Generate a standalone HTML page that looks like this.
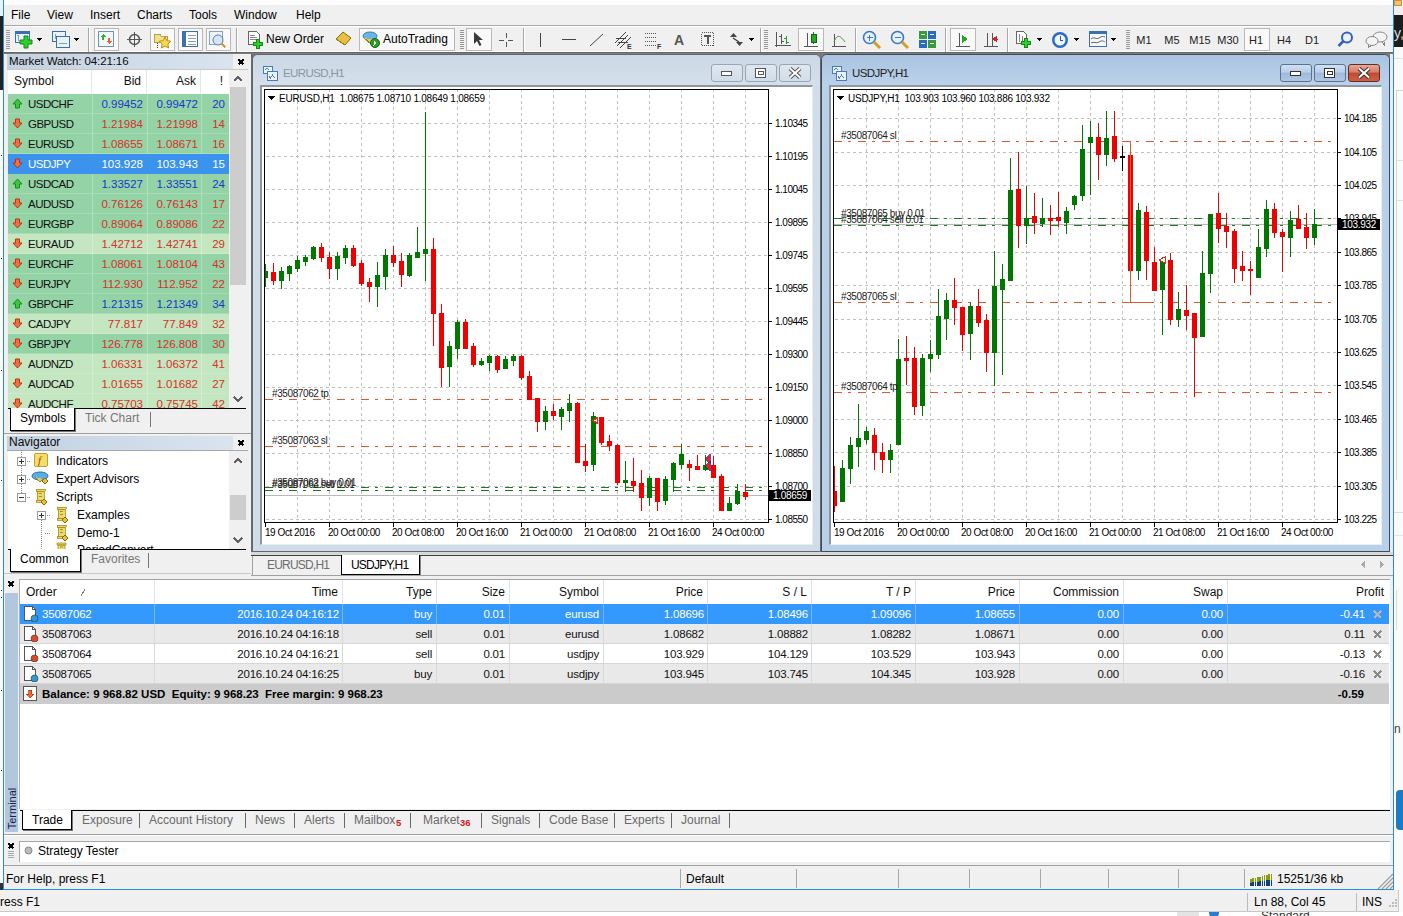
<!DOCTYPE html>
<html><head><meta charset="utf-8"><title>MetaTrader 4</title>
<style>
html,body{margin:0;padding:0;}
body{width:1403px;height:916px;position:relative;overflow:hidden;background:#f0f0f0;font-family:"Liberation Sans", sans-serif;}
div,svg{box-sizing:border-box;}
</style></head><body>
<div style="position:absolute;left:0px;top:0px;width:3px;height:16px;background:#e9f3fb;"></div><div style="position:absolute;left:0px;top:16px;width:3px;height:74px;background:#222;"></div><div style="position:absolute;left:0px;top:90px;width:3px;height:800px;background:#fbfbfb;"></div><div style="position:absolute;left:1px;top:155px;width:1px;height:1px;background:#333;"></div><div style="position:absolute;left:1px;top:258px;width:1px;height:1px;background:#333;"></div><div style="position:absolute;left:1px;top:370px;width:1px;height:1px;background:#333;"></div><div style="position:absolute;left:1px;top:480px;width:1px;height:1px;background:#333;"></div><div style="position:absolute;left:1px;top:590px;width:1px;height:1px;background:#333;"></div><div style="position:absolute;left:1px;top:597px;width:1px;height:1px;background:#333;"></div><div style="position:absolute;left:1px;top:690px;width:1px;height:1px;background:#333;"></div><div style="position:absolute;left:1px;top:770px;width:1px;height:1px;background:#333;"></div><div style="position:absolute;left:0px;top:883px;width:3px;height:7px;background:#333;"></div><div style="position:absolute;left:1394px;top:0px;width:9px;height:6px;background:#f5f5f5;"></div><div style="position:absolute;left:1394px;top:0px;width:8px;height:6px;background:#f6c26b;border:1px solid #c89040;"></div><div style="position:absolute;left:1394px;top:15px;width:9px;height:32px;background:#1d1d1d;"></div><div style="position:absolute;left:1394px;top:25px;font-size:14px;line-height:17px;color:#ddd;white-space:nowrap;">y,</div><div style="position:absolute;left:1394px;top:47px;width:9px;height:843px;background:#fafafa;"></div><div style="position:absolute;left:1394px;top:58px;width:9px;height:1px;background:#e4e4e4;"></div><div style="position:absolute;left:1396px;top:90px;width:1px;height:390px;background:#d4d4d4;"></div><div style="position:absolute;left:1396px;top:90px;width:7px;height:1px;background:#d4d4d4;"></div><div style="position:absolute;left:1397px;top:160px;width:6px;height:1px;background:#e0e0e0;"></div><div style="position:absolute;left:1397px;top:200px;width:6px;height:1px;background:#e0e0e0;"></div><div style="position:absolute;left:1394px;top:512px;width:9px;height:1px;background:#dcdcdc;"></div><div style="position:absolute;left:1394px;top:535px;width:9px;height:1px;background:#e6e6e6;"></div><div style="position:absolute;left:1396px;top:590px;width:1px;height:40px;background:#d8d8d8;"></div><div style="position:absolute;left:1394px;top:722px;font-size:12px;line-height:15px;color:#444;white-space:nowrap;">n</div><div style="position:absolute;left:1396px;top:790px;width:7px;height:40px;background:#1b7bc4;border-radius:4px 0 0 4px;"></div><div style="position:absolute;left:0px;top:890px;width:1399px;height:21px;background:#f0f0f0;"></div><div style="position:absolute;left:1398px;top:890px;width:1px;height:21px;background:#c8c8c8;"></div><div style="position:absolute;left:0px;top:911px;width:1399px;height:1px;background:#c8c8c8;"></div><div style="position:absolute;left:0px;top:912px;width:1403px;height:4px;background:#fff;"></div><div style="position:absolute;left:1399px;top:890px;width:4px;height:22px;background:#fafafa;"></div><div style="position:absolute;left:0px;top:895px;font-size:12px;line-height:15px;color:#000;white-space:nowrap;">ress F1</div><div style="position:absolute;left:1247px;top:893px;width:1px;height:18px;background:#bbb;"></div><div style="position:absolute;left:1254px;top:895px;font-size:12px;line-height:15px;color:#000;white-space:nowrap;">Ln 88, Col 45</div><div style="position:absolute;left:1356px;top:893px;width:1px;height:18px;background:#bbb;"></div><div style="position:absolute;left:1362px;top:895px;font-size:12px;line-height:15px;color:#000;white-space:nowrap;">INS</div><svg style="position:absolute;left:1388px;top:898px;" width="10" height="10" viewBox="0 0 10 10" shape-rendering="crispEdges"><rect x="7" y="1" width="2" height="2" fill="#bbb"/><rect x="4" y="4" width="2" height="2" fill="#bbb"/><rect x="7" y="4" width="2" height="2" fill="#bbb"/><rect x="1" y="7" width="2" height="2" fill="#bbb"/><rect x="4" y="7" width="2" height="2" fill="#bbb"/><rect x="7" y="7" width="2" height="2" fill="#bbb"/></svg><div style="position:absolute;left:1177px;top:912px;width:22px;height:4px;background:#e4e4e4;"></div><div style="position:absolute;left:1200px;top:912px;width:120px;height:4px;overflow:hidden;"><div style="position:absolute;left:61px;top:-3px;font-size:12px;line-height:14px;color:#333;">Standard</div><div style="position:absolute;left:9px;top:-4px;width:10px;height:10px;border-radius:5px;background:#2a7ad0;"></div></div><div style="position:absolute;left:3px;top:0px;width:1px;height:890px;background:#2f8ad4;"></div><div style="position:absolute;left:1393px;top:0px;width:1px;height:890px;background:#2f8ad4;"></div><div style="position:absolute;left:3px;top:889px;width:1391px;height:1px;background:#2f8ad4;"></div><div style="position:absolute;left:4px;top:0px;width:1389px;height:5px;background:#fdfdfd;"></div><div style="position:absolute;left:4px;top:5px;width:1389px;height:20px;background:#f0f0f0;"></div><div style="position:absolute;left:11px;top:8px;font-size:12px;line-height:15px;color:#000;white-space:nowrap;">File</div><div style="position:absolute;left:47px;top:8px;font-size:12px;line-height:15px;color:#000;white-space:nowrap;">View</div><div style="position:absolute;left:90px;top:8px;font-size:12px;line-height:15px;color:#000;white-space:nowrap;">Insert</div><div style="position:absolute;left:137px;top:8px;font-size:12px;line-height:15px;color:#000;white-space:nowrap;">Charts</div><div style="position:absolute;left:189px;top:8px;font-size:12px;line-height:15px;color:#000;white-space:nowrap;">Tools</div><div style="position:absolute;left:234px;top:8px;font-size:12px;line-height:15px;color:#000;white-space:nowrap;">Window</div><div style="position:absolute;left:296px;top:8px;font-size:12px;line-height:15px;color:#000;white-space:nowrap;">Help</div><div style="position:absolute;left:4px;top:25px;width:1389px;height:1px;background:#a9a9a9;"></div><div style="position:absolute;left:4px;top:26px;width:1389px;height:1px;background:#fff;"></div><div style="position:absolute;left:4px;top:27px;width:1389px;height:25px;background:#f0f0f0;"></div><div style="position:absolute;left:4px;top:51px;width:1389px;height:1px;background:#fff;"></div><div style="position:absolute;left:4px;top:52px;width:1389px;height:2px;background:linear-gradient(#5a5a5a,#8a8a8a);"></div><svg style="position:absolute;left:6px;top:30px;" width="4" height="20" viewBox="0 0 4 20" shape-rendering="crispEdges"><rect x="0" y="0" width="4" height="1" fill="#9a9a9a"/><rect x="0" y="2" width="4" height="1" fill="#9a9a9a"/><rect x="0" y="4" width="4" height="1" fill="#9a9a9a"/><rect x="0" y="6" width="4" height="1" fill="#9a9a9a"/><rect x="0" y="8" width="4" height="1" fill="#9a9a9a"/><rect x="0" y="10" width="4" height="1" fill="#9a9a9a"/><rect x="0" y="12" width="4" height="1" fill="#9a9a9a"/><rect x="0" y="14" width="4" height="1" fill="#9a9a9a"/><rect x="0" y="16" width="4" height="1" fill="#9a9a9a"/><rect x="0" y="18" width="4" height="1" fill="#9a9a9a"/></svg><svg style="position:absolute;left:15px;top:30px;" width="19" height="19" viewBox="0 0 19 19" shape-rendering="crispEdges"><rect x="0.5" y="1.5" width="14" height="11" fill="#eaf2fb" stroke="#3a6fb0"/><rect x="0.5" y="1.5" width="14" height="2" fill="#3a6fb0"/><path d="M3 5v6M2 6l1-1 1 1" stroke="#7f9cc4" fill="none"/><path d="M9 6h4v4h4v4h-4v4h-4v-4H5v-4h4z" fill="#2fcf2f" stroke="#118a11" shape-rendering="geometricPrecision"/></svg><svg style="position:absolute;left:37px;top:38px;" width="5" height="3" viewBox="0 0 5 3" shape-rendering="crispEdges"><path d="M0 0H5L2.5 3Z" fill="#000"/></svg><svg style="position:absolute;left:52px;top:30px;" width="19" height="19" viewBox="0 0 19 19" shape-rendering="crispEdges"><rect x="0.5" y="1.5" width="13" height="10" fill="#eaf2fb" stroke="#3a6fb0"/><rect x="4.5" y="6.5" width="13" height="11" fill="#eaf2fb" stroke="#3a6fb0"/><path d="M3 4v5M7 13h8" stroke="#7f9cc4"/></svg><svg style="position:absolute;left:74px;top:38px;" width="5" height="3" viewBox="0 0 5 3" shape-rendering="crispEdges"><path d="M0 0H5L2.5 3Z" fill="#000"/></svg><div style="position:absolute;left:88px;top:28px;width:1px;height:24px;background:#a8a8a8;"></div><div style="position:absolute;left:89px;top:28px;width:1px;height:24px;background:#fff;"></div><div style="position:absolute;left:94px;top:28px;width:25px;height:23px;border:1px solid #b9b9b9;background:#f9f9f9;"></div><svg style="position:absolute;left:98px;top:31px;" width="16" height="17" viewBox="0 0 16 17" shape-rendering="crispEdges"><rect x="0.5" y="0.5" width="15" height="15" fill="#f3f8fd" stroke="#6a92c4"/><path d="M5 3l3 3H6v3H4V6H2z" fill="#2fb62f"/><path d="M11 13l3-3h-2V7h-2v3H8z" fill="#f06030"/></svg><svg style="position:absolute;left:127px;top:32px;" width="15" height="15" viewBox="0 0 15 15" shape-rendering="crispEdges"><circle cx="7.5" cy="7.5" r="5" fill="none" stroke="#555" stroke-width="1.5" shape-rendering="geometricPrecision"/><path d="M7.5 0v15M0 7.5h15" stroke="#555" stroke-width="1.3"/></svg><div style="position:absolute;left:150px;top:28px;width:25px;height:23px;border:1px solid #b9b9b9;background:#f9f9f9;"></div><svg style="position:absolute;left:153px;top:31px;" width="19" height="18" viewBox="0 0 19 18" shape-rendering="crispEdges"><path d="M1 3h6l1 2h6v6H1z" fill="#f4e08a" stroke="#b8a040"/><path d="M12 6l1.8 3.6 4 .6-2.9 2.8.7 4-3.6-1.9-3.6 1.9.7-4L6.2 10.2l4-.6z" fill="#f7d84a" stroke="#b89020" shape-rendering="geometricPrecision"/><path d="M4 12v5" stroke="#333" stroke-dasharray="1 1"/></svg><div style="position:absolute;left:178px;top:28px;width:25px;height:23px;border:1px solid #b9b9b9;background:#f9f9f9;"></div><svg style="position:absolute;left:182px;top:31px;" width="16" height="16" viewBox="0 0 16 16" shape-rendering="crispEdges"><rect x="0.5" y="0.5" width="15" height="15" fill="#fff" stroke="#3a6fb0"/><rect x="1" y="1" width="3" height="14" fill="#3a6fb0"/><path d="M6 4h8M6 7h8M6 10h8M6 13h8" stroke="#8aa0c0"/></svg><div style="position:absolute;left:206px;top:28px;width:25px;height:23px;border:1px solid #b9b9b9;background:#f9f9f9;"></div><svg style="position:absolute;left:209px;top:30px;" width="19" height="20" viewBox="0 0 19 20" shape-rendering="crispEdges"><rect x="0.5" y="1.5" width="13" height="13" fill="#eef4fb" stroke="#8aa0c0"/><circle cx="9" cy="10" r="5" fill="#d6e6f6" stroke="#5a7fae" shape-rendering="geometricPrecision"/><path d="M12.5 13.5l4 4" stroke="#c8a030" stroke-width="2.5"/></svg><div style="position:absolute;left:236px;top:28px;width:1px;height:24px;background:#a8a8a8;"></div><div style="position:absolute;left:237px;top:28px;width:1px;height:24px;background:#fff;"></div><svg style="position:absolute;left:247px;top:31px;" width="17" height="18" viewBox="0 0 17 18" shape-rendering="crispEdges"><path d="M1.5 0.5h8l3 3v10h-11z" fill="#fff" stroke="#666"/><path d="M3 4h5M3 6h7M3 8h7" stroke="#888"/><path d="M9 8h3v3h3v3h-3v3H9v-3H6v-3h3z" fill="#2fcf2f" stroke="#118a11"/></svg><div style="position:absolute;left:266px;top:32px;font-size:12px;line-height:15px;color:#000;white-space:nowrap;">New Order</div><svg style="position:absolute;left:334px;top:31px;" width="18" height="16" viewBox="0 0 18 16" shape-rendering="crispEdges"><path d="M2 8l7-7 8 6-6 7z" fill="#e8c040" stroke="#8a6a10" shape-rendering="geometricPrecision"/><path d="M2 8l9 6" stroke="#a08020"/></svg><div style="position:absolute;left:359px;top:28px;width:96px;height:23px;border:1px solid #b9b9b9;background:#f9f9f9;"></div><svg style="position:absolute;left:362px;top:30px;" width="18" height="19" viewBox="0 0 18 19" shape-rendering="crispEdges"><ellipse cx="8" cy="6" rx="7" ry="4" fill="#6ab4e8" stroke="#3a7ab0" shape-rendering="geometricPrecision"/><path d="M2 8l7 6 5-4" fill="#e8c850" stroke="#a08020"/><circle cx="13" cy="13" r="4.5" fill="#28a028" stroke="#0a6a0a" shape-rendering="geometricPrecision"/><path d="M11.5 10.5v5l3.5-2.5z" fill="#fff"/></svg><div style="position:absolute;left:383px;top:32px;font-size:12px;line-height:15px;color:#000;white-space:nowrap;">AutoTrading</div><svg style="position:absolute;left:460px;top:30px;" width="4" height="20" viewBox="0 0 4 20" shape-rendering="crispEdges"><rect x="0" y="0" width="4" height="1" fill="#9a9a9a"/><rect x="0" y="2" width="4" height="1" fill="#9a9a9a"/><rect x="0" y="4" width="4" height="1" fill="#9a9a9a"/><rect x="0" y="6" width="4" height="1" fill="#9a9a9a"/><rect x="0" y="8" width="4" height="1" fill="#9a9a9a"/><rect x="0" y="10" width="4" height="1" fill="#9a9a9a"/><rect x="0" y="12" width="4" height="1" fill="#9a9a9a"/><rect x="0" y="14" width="4" height="1" fill="#9a9a9a"/><rect x="0" y="16" width="4" height="1" fill="#9a9a9a"/><rect x="0" y="18" width="4" height="1" fill="#9a9a9a"/></svg><div style="position:absolute;left:466px;top:28px;width:26px;height:23px;border:1px solid #b9b9b9;background:#f9f9f9;"></div><svg style="position:absolute;left:473px;top:32px;" width="11" height="15" viewBox="0 0 11 15" shape-rendering="crispEdges"><path d="M1 0v12l3-3 2.5 5 2-1-2.5-5H10z" fill="#3a3a3a" shape-rendering="geometricPrecision"/></svg><svg style="position:absolute;left:498px;top:32px;" width="16" height="16" viewBox="0 0 16 16" shape-rendering="crispEdges"><path d="M8 1v5M8 10v5M1 8h5M10 8h5" stroke="#555"/></svg><div style="position:absolute;left:523px;top:28px;width:1px;height:24px;background:#a8a8a8;"></div><div style="position:absolute;left:524px;top:28px;width:1px;height:24px;background:#fff;"></div><svg style="position:absolute;left:539px;top:33px;" width="3" height="14" viewBox="0 0 3 14" shape-rendering="crispEdges"><rect x="1" y="0" width="1" height="14" fill="#444"/></svg><svg style="position:absolute;left:562px;top:39px;" width="14" height="2" viewBox="0 0 14 2" shape-rendering="crispEdges"><rect x="0" y="0" width="14" height="1" fill="#444"/></svg><svg style="position:absolute;left:589px;top:33px;" width="15" height="14" viewBox="0 0 15 14" shape-rendering="crispEdges"><path d="M1 13L14 1" stroke="#444" shape-rendering="geometricPrecision"/></svg><svg style="position:absolute;left:614px;top:31px;" width="20" height="18" viewBox="0 0 20 18" shape-rendering="crispEdges"><path d="M1 12L12 1M3 15L14 4M6 17L17 6" stroke="#444" shape-rendering="geometricPrecision"/><path d="M2 7h10M4 11h10" stroke="#444"/><text x="13" y="18" font-size="7" font-family="Liberation Sans" font-weight="bold" fill="#333">E</text></svg><svg style="position:absolute;left:644px;top:31px;" width="20" height="18" viewBox="0 0 20 18" shape-rendering="crispEdges"><path d="M1 2h12M1 6h12M1 10h12M1 14h12" stroke="#555" stroke-dasharray="1 1"/><text x="13" y="18" font-size="7" font-family="Liberation Sans" font-weight="bold" fill="#333">F</text></svg><div style="position:absolute;left:674px;top:32px;font-size:14px;line-height:17px;color:#555;white-space:nowrap;font-weight:bold;">A</div><svg style="position:absolute;left:700px;top:31px;" width="16" height="17" viewBox="0 0 16 17" shape-rendering="crispEdges"><rect x="1.5" y="1.5" width="12" height="13" fill="none" stroke="#555" stroke-dasharray="1 1"/><path d="M4 4h7v2H8.5v7h-2V6H4z" fill="#555"/></svg><svg style="position:absolute;left:729px;top:32px;" width="16" height="16" viewBox="0 0 16 16" shape-rendering="crispEdges"><path d="M1 5L4.5 1 8 5z" fill="#444" shape-rendering="geometricPrecision"/><path d="M7 10l3.5 4 3.5-4z" fill="#444" shape-rendering="geometricPrecision"/><path d="M4 6l6 4" stroke="#444" stroke-width="1.5" shape-rendering="geometricPrecision"/></svg><svg style="position:absolute;left:749px;top:38px;" width="5" height="3" viewBox="0 0 5 3" shape-rendering="crispEdges"><path d="M0 0H5L2.5 3Z" fill="#000"/></svg><div style="position:absolute;left:760px;top:28px;width:1px;height:24px;background:#a8a8a8;"></div><div style="position:absolute;left:761px;top:28px;width:1px;height:24px;background:#fff;"></div><svg style="position:absolute;left:764px;top:30px;" width="4" height="20" viewBox="0 0 4 20" shape-rendering="crispEdges"><rect x="0" y="0" width="4" height="1" fill="#9a9a9a"/><rect x="0" y="2" width="4" height="1" fill="#9a9a9a"/><rect x="0" y="4" width="4" height="1" fill="#9a9a9a"/><rect x="0" y="6" width="4" height="1" fill="#9a9a9a"/><rect x="0" y="8" width="4" height="1" fill="#9a9a9a"/><rect x="0" y="10" width="4" height="1" fill="#9a9a9a"/><rect x="0" y="12" width="4" height="1" fill="#9a9a9a"/><rect x="0" y="14" width="4" height="1" fill="#9a9a9a"/><rect x="0" y="16" width="4" height="1" fill="#9a9a9a"/><rect x="0" y="18" width="4" height="1" fill="#9a9a9a"/></svg><svg style="position:absolute;left:775px;top:31px;" width="17" height="17" viewBox="0 0 17 17" shape-rendering="crispEdges"><path d="M1.5 1v15M0 14.5h16" stroke="#555"/><path d="M6.5 3v10M4 5h2.5M6.5 10H9" stroke="#555"/><path d="M11.5 5v8M9 7h2.5M11.5 11H14" stroke="#2a9a2a"/></svg><div style="position:absolute;left:798px;top:28px;width:26px;height:23px;border:1px solid #b9b9b9;background:#f9f9f9;"></div><svg style="position:absolute;left:803px;top:31px;" width="16" height="16" viewBox="0 0 16 16" shape-rendering="crispEdges"><path d="M1 15h14M4 2v13M10 1v12" stroke="#555"/><rect x="8" y="3" width="5" height="8" fill="#22aa22" stroke="#0a6a0a"/></svg><svg style="position:absolute;left:831px;top:32px;" width="16" height="15" viewBox="0 0 16 15" shape-rendering="crispEdges"><path d="M1 14h14M3 2v12" stroke="#555"/><path d="M3 10C6 2 9 3 14 10" stroke="#4a8a4a" fill="none" shape-rendering="geometricPrecision"/></svg><div style="position:absolute;left:855px;top:28px;width:1px;height:24px;background:#a8a8a8;"></div><div style="position:absolute;left:856px;top:28px;width:1px;height:24px;background:#fff;"></div><svg style="position:absolute;left:862px;top:30px;" width="20" height="20" viewBox="0 0 20 20" shape-rendering="crispEdges"><circle cx="7.5" cy="7.5" r="6" fill="#e8f2fc" stroke="#3a78c0" stroke-width="1.6" shape-rendering="geometricPrecision"/><path d="M4.5 7.5h6M7.5 4.5v6" stroke="#3a78c0" stroke-width="1.8"/><path d="M12 12l6 6" stroke="#d4a020" stroke-width="3" shape-rendering="geometricPrecision"/></svg><svg style="position:absolute;left:890px;top:30px;" width="20" height="20" viewBox="0 0 20 20" shape-rendering="crispEdges"><circle cx="7.5" cy="7.5" r="6" fill="#e8f2fc" stroke="#3a78c0" stroke-width="1.6" shape-rendering="geometricPrecision"/><path d="M4.5 7.5h6" stroke="#3a78c0" stroke-width="1.8"/><path d="M12 12l6 6" stroke="#d4a020" stroke-width="3" shape-rendering="geometricPrecision"/></svg><svg style="position:absolute;left:919px;top:31px;" width="18" height="18" viewBox="0 0 18 18" shape-rendering="crispEdges"><rect x="0" y="0" width="8" height="8" fill="#3a9a3a"/><rect x="9" y="0" width="8" height="8" fill="#2a6ac0"/><rect x="0" y="9" width="8" height="8" fill="#2a6ac0"/><rect x="9" y="9" width="8" height="8" fill="#3a9a3a"/><path d="M2 3h4M11 3h4M2 12h4M11 12h4" stroke="#cfe"/></svg><div style="position:absolute;left:945px;top:28px;width:1px;height:24px;background:#a8a8a8;"></div><div style="position:absolute;left:946px;top:28px;width:1px;height:24px;background:#fff;"></div><div style="position:absolute;left:950px;top:28px;width:26px;height:23px;border:1px solid #b9b9b9;background:#f9f9f9;"></div><svg style="position:absolute;left:955px;top:31px;" width="16" height="16" viewBox="0 0 16 16" shape-rendering="crispEdges"><path d="M1 15h14M4 2v13" stroke="#555"/><path d="M7 4v8l6-4z" fill="#22aa22"/></svg><svg style="position:absolute;left:983px;top:31px;" width="16" height="16" viewBox="0 0 16 16" shape-rendering="crispEdges"><path d="M1 15h14M4 2v13M9 2v13" stroke="#555"/><path d="M10 8h5M10 8l3-2v4z" fill="#d02020" stroke="#d02020"/></svg><div style="position:absolute;left:1007px;top:28px;width:1px;height:24px;background:#a8a8a8;"></div><div style="position:absolute;left:1008px;top:28px;width:1px;height:24px;background:#fff;"></div><svg style="position:absolute;left:1015px;top:30px;" width="19" height="19" viewBox="0 0 19 19" shape-rendering="crispEdges"><path d="M1.5 1.5h7l3 3v9h-10z" fill="#fff" stroke="#666"/><path d="M4 4v8M7 6v6" stroke="#888"/><path d="M9 8h3v3h3v3h-3v3H9v-3H6v-3h3z" fill="#2fcf2f" stroke="#118a11"/></svg><svg style="position:absolute;left:1037px;top:38px;" width="5" height="3" viewBox="0 0 5 3" shape-rendering="crispEdges"><path d="M0 0H5L2.5 3Z" fill="#000"/></svg><svg style="position:absolute;left:1051px;top:31px;" width="18" height="18" viewBox="0 0 18 18" shape-rendering="crispEdges"><circle cx="9" cy="9" r="8" fill="#2a6ac0" shape-rendering="geometricPrecision"/><circle cx="9" cy="9" r="5.5" fill="#eef6ff" shape-rendering="geometricPrecision"/><path d="M9 5v4h3" stroke="#2a5a9a" fill="none"/></svg><svg style="position:absolute;left:1074px;top:38px;" width="5" height="3" viewBox="0 0 5 3" shape-rendering="crispEdges"><path d="M0 0H5L2.5 3Z" fill="#000"/></svg><svg style="position:absolute;left:1089px;top:31px;" width="18" height="17" viewBox="0 0 18 17" shape-rendering="crispEdges"><rect x="0.5" y="0.5" width="17" height="15" fill="#f4f8fc" stroke="#3a6fb0"/><rect x="1" y="1" width="16" height="2" fill="#3a6fb0"/><path d="M2 8c3-3 5 1 8-1s4-2 6-1M2 12c3-2 5 1 8-1s4-1 6 0" stroke="#666" fill="none" shape-rendering="geometricPrecision"/></svg><svg style="position:absolute;left:1111px;top:38px;" width="5" height="3" viewBox="0 0 5 3" shape-rendering="crispEdges"><path d="M0 0H5L2.5 3Z" fill="#000"/></svg><svg style="position:absolute;left:1126px;top:30px;" width="4" height="20" viewBox="0 0 4 20" shape-rendering="crispEdges"><rect x="0" y="0" width="4" height="1" fill="#9a9a9a"/><rect x="0" y="2" width="4" height="1" fill="#9a9a9a"/><rect x="0" y="4" width="4" height="1" fill="#9a9a9a"/><rect x="0" y="6" width="4" height="1" fill="#9a9a9a"/><rect x="0" y="8" width="4" height="1" fill="#9a9a9a"/><rect x="0" y="10" width="4" height="1" fill="#9a9a9a"/><rect x="0" y="12" width="4" height="1" fill="#9a9a9a"/><rect x="0" y="14" width="4" height="1" fill="#9a9a9a"/><rect x="0" y="16" width="4" height="1" fill="#9a9a9a"/><rect x="0" y="18" width="4" height="1" fill="#9a9a9a"/></svg><div style="position:absolute;left:1044px;width:200px;top:33px;font-size:11px;line-height:14px;color:#222;white-space:nowrap;text-align:center;">M1</div><div style="position:absolute;left:1072px;width:200px;top:33px;font-size:11px;line-height:14px;color:#222;white-space:nowrap;text-align:center;">M5</div><div style="position:absolute;left:1100px;width:200px;top:33px;font-size:11px;line-height:14px;color:#222;white-space:nowrap;text-align:center;">M15</div><div style="position:absolute;left:1128px;width:200px;top:33px;font-size:11px;line-height:14px;color:#222;white-space:nowrap;text-align:center;">M30</div><div style="position:absolute;left:1244px;top:28px;width:26px;height:23px;border:1px solid #b9b9b9;background:#f9f9f9;"></div><div style="position:absolute;left:1156px;width:200px;top:33px;font-size:11px;line-height:14px;color:#222;white-space:nowrap;text-align:center;">H1</div><div style="position:absolute;left:1184px;width:200px;top:33px;font-size:11px;line-height:14px;color:#222;white-space:nowrap;text-align:center;">H4</div><div style="position:absolute;left:1212px;width:200px;top:33px;font-size:11px;line-height:14px;color:#222;white-space:nowrap;text-align:center;">D1</div><svg style="position:absolute;left:1337px;top:31px;" width="17" height="17" viewBox="0 0 17 17" shape-rendering="crispEdges"><circle cx="10" cy="6.5" r="5" fill="none" stroke="#3060c0" stroke-width="2" shape-rendering="geometricPrecision"/><path d="M6.5 10L1.5 15" stroke="#3060c0" stroke-width="2.5" shape-rendering="geometricPrecision"/></svg><svg style="position:absolute;left:1365px;top:31px;" width="24" height="17" viewBox="0 0 24 17" shape-rendering="crispEdges"><ellipse cx="15" cy="6" rx="7" ry="5" fill="#f4f4f4" stroke="#888" shape-rendering="geometricPrecision"/><path d="M17 10.5l2 3 0-3" fill="#f4f4f4" stroke="#888"/><ellipse cx="7" cy="10" rx="6" ry="4.5" fill="#f4f4f4" stroke="#888" shape-rendering="geometricPrecision"/><path d="M4 14l-1 3 3-2.5" fill="#f4f4f4" stroke="#888"/></svg><div style="position:absolute;left:4px;top:54px;width:247px;height:522px;background:#f0f0f0;"></div><div style="position:absolute;left:7px;top:54px;width:226px;height:15px;background:linear-gradient(90deg,#c3d1e0,#d9e4ef);"></div><div style="position:absolute;left:9px;top:54px;font-size:11.5px;line-height:14.5px;color:#0a0a0a;white-space:nowrap;letter-spacing:-0.1px;">Market Watch: 04:21:16</div><svg style="position:absolute;left:237px;top:58px;" width="8" height="8" viewBox="0 0 8 8" shape-rendering="crispEdges"><path d="M1.5 1.5l5 5M6.5 1.5l-5 5" stroke="#000" stroke-width="1.6"/></svg><div style="position:absolute;left:7px;top:69px;width:241px;height:1px;background:#c8c8c8;"></div><div style="position:absolute;left:8px;top:70px;width:221px;height:338px;background:#fff;"></div><div style="position:absolute;left:91px;top:70px;width:1px;height:23px;background:#e5e5e5;"></div><div style="position:absolute;left:146px;top:70px;width:1px;height:23px;background:#e5e5e5;"></div><div style="position:absolute;left:200px;top:70px;width:1px;height:23px;background:#e5e5e5;"></div><div style="position:absolute;left:14px;top:74px;font-size:12px;line-height:15px;color:#111;white-space:nowrap;">Symbol</div><div style="position:absolute;right:1262px;top:74px;font-size:12px;line-height:15px;color:#111;white-space:nowrap;text-align:right;">Bid</div><div style="position:absolute;right:1207px;top:74px;font-size:12px;line-height:15px;color:#111;white-space:nowrap;text-align:right;">Ask</div><div style="position:absolute;right:1180px;top:74px;font-size:12px;line-height:15px;color:#111;white-space:nowrap;text-align:right;">!</div><div style="position:absolute;left:8px;top:93px;width:221px;height:315px;overflow:hidden;"><div style="position:absolute;left:0;top:1px;width:221px;height:20px;background:#93d3a6;"></div><div style="position:absolute;left:84px;top:1px;width:1px;height:20px;background:rgba(255,255,255,0.25);"></div><div style="position:absolute;left:139px;top:1px;width:1px;height:20px;background:rgba(255,255,255,0.25);"></div><div style="position:absolute;left:193px;top:1px;width:1px;height:20px;background:rgba(255,255,255,0.25);"></div><div style="position:absolute;left:0;top:20px;width:221px;height:1px;background:rgba(255,255,255,0.18);"></div><svg style="position:absolute;left:4px;top:5px" width="11" height="11"><path d="M5.5 1L10 6H7.5v4h-4V6H1z" fill="#3cc83c" stroke="#1a8a1a" shape-rendering="geometricPrecision"/></svg><div style="position:absolute;left:20px;top:4px;font-size:11.5px;line-height:15px;color:#111;white-space:nowrap;letter-spacing:-0.5px;">USDCHF</div><div style="position:absolute;right:86px;top:4px;font-size:11.5px;line-height:15px;color:#1a36c8;white-space:nowrap;">0.99452</div><div style="position:absolute;right:31px;top:4px;font-size:11.5px;line-height:15px;color:#1a36c8;white-space:nowrap;">0.99472</div><div style="position:absolute;right:4px;top:4px;font-size:11.5px;line-height:15px;color:#1a36c8;white-space:nowrap;">20</div><div style="position:absolute;left:0;top:21px;width:221px;height:20px;background:#93d3a6;"></div><div style="position:absolute;left:84px;top:21px;width:1px;height:20px;background:rgba(255,255,255,0.25);"></div><div style="position:absolute;left:139px;top:21px;width:1px;height:20px;background:rgba(255,255,255,0.25);"></div><div style="position:absolute;left:193px;top:21px;width:1px;height:20px;background:rgba(255,255,255,0.25);"></div><div style="position:absolute;left:0;top:40px;width:221px;height:1px;background:rgba(255,255,255,0.18);"></div><svg style="position:absolute;left:4px;top:25px" width="11" height="11"><path d="M5.5 10L10 5H7.5V1h-4v4H1z" fill="#f07040" stroke="#c03010" shape-rendering="geometricPrecision"/></svg><div style="position:absolute;left:20px;top:24px;font-size:11.5px;line-height:15px;color:#111;white-space:nowrap;letter-spacing:-0.5px;">GBPUSD</div><div style="position:absolute;right:86px;top:24px;font-size:11.5px;line-height:15px;color:#d8302a;white-space:nowrap;">1.21984</div><div style="position:absolute;right:31px;top:24px;font-size:11.5px;line-height:15px;color:#d8302a;white-space:nowrap;">1.21998</div><div style="position:absolute;right:4px;top:24px;font-size:11.5px;line-height:15px;color:#d8302a;white-space:nowrap;">14</div><div style="position:absolute;left:0;top:41px;width:221px;height:20px;background:#93d3a6;"></div><div style="position:absolute;left:84px;top:41px;width:1px;height:20px;background:rgba(255,255,255,0.25);"></div><div style="position:absolute;left:139px;top:41px;width:1px;height:20px;background:rgba(255,255,255,0.25);"></div><div style="position:absolute;left:193px;top:41px;width:1px;height:20px;background:rgba(255,255,255,0.25);"></div><div style="position:absolute;left:0;top:60px;width:221px;height:1px;background:rgba(255,255,255,0.18);"></div><svg style="position:absolute;left:4px;top:45px" width="11" height="11"><path d="M5.5 10L10 5H7.5V1h-4v4H1z" fill="#f07040" stroke="#c03010" shape-rendering="geometricPrecision"/></svg><div style="position:absolute;left:20px;top:44px;font-size:11.5px;line-height:15px;color:#111;white-space:nowrap;letter-spacing:-0.5px;">EURUSD</div><div style="position:absolute;right:86px;top:44px;font-size:11.5px;line-height:15px;color:#d8302a;white-space:nowrap;">1.08655</div><div style="position:absolute;right:31px;top:44px;font-size:11.5px;line-height:15px;color:#d8302a;white-space:nowrap;">1.08671</div><div style="position:absolute;right:4px;top:44px;font-size:11.5px;line-height:15px;color:#d8302a;white-space:nowrap;">16</div><div style="position:absolute;left:0;top:61px;width:221px;height:20px;background:#3b93ee;"></div><svg style="position:absolute;left:4px;top:65px" width="11" height="11"><path d="M5.5 10L10 5H7.5V1h-4v4H1z" fill="#f07040" stroke="#c03010" shape-rendering="geometricPrecision"/></svg><div style="position:absolute;left:20px;top:64px;font-size:11.5px;line-height:15px;color:#fff;white-space:nowrap;letter-spacing:-0.5px;">USDJPY</div><div style="position:absolute;right:86px;top:64px;font-size:11.5px;line-height:15px;color:#fff;white-space:nowrap;">103.928</div><div style="position:absolute;right:31px;top:64px;font-size:11.5px;line-height:15px;color:#fff;white-space:nowrap;">103.943</div><div style="position:absolute;right:4px;top:64px;font-size:11.5px;line-height:15px;color:#fff;white-space:nowrap;">15</div><div style="position:absolute;left:0;top:81px;width:221px;height:20px;background:#93d3a6;"></div><div style="position:absolute;left:84px;top:81px;width:1px;height:20px;background:rgba(255,255,255,0.25);"></div><div style="position:absolute;left:139px;top:81px;width:1px;height:20px;background:rgba(255,255,255,0.25);"></div><div style="position:absolute;left:193px;top:81px;width:1px;height:20px;background:rgba(255,255,255,0.25);"></div><div style="position:absolute;left:0;top:100px;width:221px;height:1px;background:rgba(255,255,255,0.18);"></div><svg style="position:absolute;left:4px;top:85px" width="11" height="11"><path d="M5.5 1L10 6H7.5v4h-4V6H1z" fill="#3cc83c" stroke="#1a8a1a" shape-rendering="geometricPrecision"/></svg><div style="position:absolute;left:20px;top:84px;font-size:11.5px;line-height:15px;color:#111;white-space:nowrap;letter-spacing:-0.5px;">USDCAD</div><div style="position:absolute;right:86px;top:84px;font-size:11.5px;line-height:15px;color:#1a36c8;white-space:nowrap;">1.33527</div><div style="position:absolute;right:31px;top:84px;font-size:11.5px;line-height:15px;color:#1a36c8;white-space:nowrap;">1.33551</div><div style="position:absolute;right:4px;top:84px;font-size:11.5px;line-height:15px;color:#1a36c8;white-space:nowrap;">24</div><div style="position:absolute;left:0;top:101px;width:221px;height:20px;background:#93d3a6;"></div><div style="position:absolute;left:84px;top:101px;width:1px;height:20px;background:rgba(255,255,255,0.25);"></div><div style="position:absolute;left:139px;top:101px;width:1px;height:20px;background:rgba(255,255,255,0.25);"></div><div style="position:absolute;left:193px;top:101px;width:1px;height:20px;background:rgba(255,255,255,0.25);"></div><div style="position:absolute;left:0;top:120px;width:221px;height:1px;background:rgba(255,255,255,0.18);"></div><svg style="position:absolute;left:4px;top:105px" width="11" height="11"><path d="M5.5 10L10 5H7.5V1h-4v4H1z" fill="#f07040" stroke="#c03010" shape-rendering="geometricPrecision"/></svg><div style="position:absolute;left:20px;top:104px;font-size:11.5px;line-height:15px;color:#111;white-space:nowrap;letter-spacing:-0.5px;">AUDUSD</div><div style="position:absolute;right:86px;top:104px;font-size:11.5px;line-height:15px;color:#d8302a;white-space:nowrap;">0.76126</div><div style="position:absolute;right:31px;top:104px;font-size:11.5px;line-height:15px;color:#d8302a;white-space:nowrap;">0.76143</div><div style="position:absolute;right:4px;top:104px;font-size:11.5px;line-height:15px;color:#d8302a;white-space:nowrap;">17</div><div style="position:absolute;left:0;top:121px;width:221px;height:20px;background:#93d3a6;"></div><div style="position:absolute;left:84px;top:121px;width:1px;height:20px;background:rgba(255,255,255,0.25);"></div><div style="position:absolute;left:139px;top:121px;width:1px;height:20px;background:rgba(255,255,255,0.25);"></div><div style="position:absolute;left:193px;top:121px;width:1px;height:20px;background:rgba(255,255,255,0.25);"></div><div style="position:absolute;left:0;top:140px;width:221px;height:1px;background:rgba(255,255,255,0.18);"></div><svg style="position:absolute;left:4px;top:125px" width="11" height="11"><path d="M5.5 10L10 5H7.5V1h-4v4H1z" fill="#f07040" stroke="#c03010" shape-rendering="geometricPrecision"/></svg><div style="position:absolute;left:20px;top:124px;font-size:11.5px;line-height:15px;color:#111;white-space:nowrap;letter-spacing:-0.5px;">EURGBP</div><div style="position:absolute;right:86px;top:124px;font-size:11.5px;line-height:15px;color:#d8302a;white-space:nowrap;">0.89064</div><div style="position:absolute;right:31px;top:124px;font-size:11.5px;line-height:15px;color:#d8302a;white-space:nowrap;">0.89086</div><div style="position:absolute;right:4px;top:124px;font-size:11.5px;line-height:15px;color:#d8302a;white-space:nowrap;">22</div><div style="position:absolute;left:0;top:141px;width:221px;height:20px;background:#c4e6c0;"></div><div style="position:absolute;left:84px;top:141px;width:1px;height:20px;background:rgba(255,255,255,0.25);"></div><div style="position:absolute;left:139px;top:141px;width:1px;height:20px;background:rgba(255,255,255,0.25);"></div><div style="position:absolute;left:193px;top:141px;width:1px;height:20px;background:rgba(255,255,255,0.25);"></div><div style="position:absolute;left:0;top:160px;width:221px;height:1px;background:rgba(255,255,255,0.18);"></div><svg style="position:absolute;left:4px;top:145px" width="11" height="11"><path d="M5.5 10L10 5H7.5V1h-4v4H1z" fill="#f07040" stroke="#c03010" shape-rendering="geometricPrecision"/></svg><div style="position:absolute;left:20px;top:144px;font-size:11.5px;line-height:15px;color:#111;white-space:nowrap;letter-spacing:-0.5px;">EURAUD</div><div style="position:absolute;right:86px;top:144px;font-size:11.5px;line-height:15px;color:#d8302a;white-space:nowrap;">1.42712</div><div style="position:absolute;right:31px;top:144px;font-size:11.5px;line-height:15px;color:#d8302a;white-space:nowrap;">1.42741</div><div style="position:absolute;right:4px;top:144px;font-size:11.5px;line-height:15px;color:#d8302a;white-space:nowrap;">29</div><div style="position:absolute;left:0;top:161px;width:221px;height:20px;background:#93d3a6;"></div><div style="position:absolute;left:84px;top:161px;width:1px;height:20px;background:rgba(255,255,255,0.25);"></div><div style="position:absolute;left:139px;top:161px;width:1px;height:20px;background:rgba(255,255,255,0.25);"></div><div style="position:absolute;left:193px;top:161px;width:1px;height:20px;background:rgba(255,255,255,0.25);"></div><div style="position:absolute;left:0;top:180px;width:221px;height:1px;background:rgba(255,255,255,0.18);"></div><svg style="position:absolute;left:4px;top:165px" width="11" height="11"><path d="M5.5 10L10 5H7.5V1h-4v4H1z" fill="#f07040" stroke="#c03010" shape-rendering="geometricPrecision"/></svg><div style="position:absolute;left:20px;top:164px;font-size:11.5px;line-height:15px;color:#111;white-space:nowrap;letter-spacing:-0.5px;">EURCHF</div><div style="position:absolute;right:86px;top:164px;font-size:11.5px;line-height:15px;color:#d8302a;white-space:nowrap;">1.08061</div><div style="position:absolute;right:31px;top:164px;font-size:11.5px;line-height:15px;color:#d8302a;white-space:nowrap;">1.08104</div><div style="position:absolute;right:4px;top:164px;font-size:11.5px;line-height:15px;color:#d8302a;white-space:nowrap;">43</div><div style="position:absolute;left:0;top:181px;width:221px;height:20px;background:#93d3a6;"></div><div style="position:absolute;left:84px;top:181px;width:1px;height:20px;background:rgba(255,255,255,0.25);"></div><div style="position:absolute;left:139px;top:181px;width:1px;height:20px;background:rgba(255,255,255,0.25);"></div><div style="position:absolute;left:193px;top:181px;width:1px;height:20px;background:rgba(255,255,255,0.25);"></div><div style="position:absolute;left:0;top:200px;width:221px;height:1px;background:rgba(255,255,255,0.18);"></div><svg style="position:absolute;left:4px;top:185px" width="11" height="11"><path d="M5.5 10L10 5H7.5V1h-4v4H1z" fill="#f07040" stroke="#c03010" shape-rendering="geometricPrecision"/></svg><div style="position:absolute;left:20px;top:184px;font-size:11.5px;line-height:15px;color:#111;white-space:nowrap;letter-spacing:-0.5px;">EURJPY</div><div style="position:absolute;right:86px;top:184px;font-size:11.5px;line-height:15px;color:#d8302a;white-space:nowrap;">112.930</div><div style="position:absolute;right:31px;top:184px;font-size:11.5px;line-height:15px;color:#d8302a;white-space:nowrap;">112.952</div><div style="position:absolute;right:4px;top:184px;font-size:11.5px;line-height:15px;color:#d8302a;white-space:nowrap;">22</div><div style="position:absolute;left:0;top:201px;width:221px;height:20px;background:#93d3a6;"></div><div style="position:absolute;left:84px;top:201px;width:1px;height:20px;background:rgba(255,255,255,0.25);"></div><div style="position:absolute;left:139px;top:201px;width:1px;height:20px;background:rgba(255,255,255,0.25);"></div><div style="position:absolute;left:193px;top:201px;width:1px;height:20px;background:rgba(255,255,255,0.25);"></div><div style="position:absolute;left:0;top:220px;width:221px;height:1px;background:rgba(255,255,255,0.18);"></div><svg style="position:absolute;left:4px;top:205px" width="11" height="11"><path d="M5.5 1L10 6H7.5v4h-4V6H1z" fill="#3cc83c" stroke="#1a8a1a" shape-rendering="geometricPrecision"/></svg><div style="position:absolute;left:20px;top:204px;font-size:11.5px;line-height:15px;color:#111;white-space:nowrap;letter-spacing:-0.5px;">GBPCHF</div><div style="position:absolute;right:86px;top:204px;font-size:11.5px;line-height:15px;color:#1a36c8;white-space:nowrap;">1.21315</div><div style="position:absolute;right:31px;top:204px;font-size:11.5px;line-height:15px;color:#1a36c8;white-space:nowrap;">1.21349</div><div style="position:absolute;right:4px;top:204px;font-size:11.5px;line-height:15px;color:#1a36c8;white-space:nowrap;">34</div><div style="position:absolute;left:0;top:221px;width:221px;height:20px;background:#c4e6c0;"></div><div style="position:absolute;left:84px;top:221px;width:1px;height:20px;background:rgba(255,255,255,0.25);"></div><div style="position:absolute;left:139px;top:221px;width:1px;height:20px;background:rgba(255,255,255,0.25);"></div><div style="position:absolute;left:193px;top:221px;width:1px;height:20px;background:rgba(255,255,255,0.25);"></div><div style="position:absolute;left:0;top:240px;width:221px;height:1px;background:rgba(255,255,255,0.18);"></div><svg style="position:absolute;left:4px;top:225px" width="11" height="11"><path d="M5.5 10L10 5H7.5V1h-4v4H1z" fill="#f07040" stroke="#c03010" shape-rendering="geometricPrecision"/></svg><div style="position:absolute;left:20px;top:224px;font-size:11.5px;line-height:15px;color:#111;white-space:nowrap;letter-spacing:-0.5px;">CADJPY</div><div style="position:absolute;right:86px;top:224px;font-size:11.5px;line-height:15px;color:#d8302a;white-space:nowrap;">77.817</div><div style="position:absolute;right:31px;top:224px;font-size:11.5px;line-height:15px;color:#d8302a;white-space:nowrap;">77.849</div><div style="position:absolute;right:4px;top:224px;font-size:11.5px;line-height:15px;color:#d8302a;white-space:nowrap;">32</div><div style="position:absolute;left:0;top:241px;width:221px;height:20px;background:#93d3a6;"></div><div style="position:absolute;left:84px;top:241px;width:1px;height:20px;background:rgba(255,255,255,0.25);"></div><div style="position:absolute;left:139px;top:241px;width:1px;height:20px;background:rgba(255,255,255,0.25);"></div><div style="position:absolute;left:193px;top:241px;width:1px;height:20px;background:rgba(255,255,255,0.25);"></div><div style="position:absolute;left:0;top:260px;width:221px;height:1px;background:rgba(255,255,255,0.18);"></div><svg style="position:absolute;left:4px;top:245px" width="11" height="11"><path d="M5.5 10L10 5H7.5V1h-4v4H1z" fill="#f07040" stroke="#c03010" shape-rendering="geometricPrecision"/></svg><div style="position:absolute;left:20px;top:244px;font-size:11.5px;line-height:15px;color:#111;white-space:nowrap;letter-spacing:-0.5px;">GBPJPY</div><div style="position:absolute;right:86px;top:244px;font-size:11.5px;line-height:15px;color:#d8302a;white-space:nowrap;">126.778</div><div style="position:absolute;right:31px;top:244px;font-size:11.5px;line-height:15px;color:#d8302a;white-space:nowrap;">126.808</div><div style="position:absolute;right:4px;top:244px;font-size:11.5px;line-height:15px;color:#d8302a;white-space:nowrap;">30</div><div style="position:absolute;left:0;top:261px;width:221px;height:20px;background:#c4e6c0;"></div><div style="position:absolute;left:84px;top:261px;width:1px;height:20px;background:rgba(255,255,255,0.25);"></div><div style="position:absolute;left:139px;top:261px;width:1px;height:20px;background:rgba(255,255,255,0.25);"></div><div style="position:absolute;left:193px;top:261px;width:1px;height:20px;background:rgba(255,255,255,0.25);"></div><div style="position:absolute;left:0;top:280px;width:221px;height:1px;background:rgba(255,255,255,0.18);"></div><svg style="position:absolute;left:4px;top:265px" width="11" height="11"><path d="M5.5 10L10 5H7.5V1h-4v4H1z" fill="#f07040" stroke="#c03010" shape-rendering="geometricPrecision"/></svg><div style="position:absolute;left:20px;top:264px;font-size:11.5px;line-height:15px;color:#111;white-space:nowrap;letter-spacing:-0.5px;">AUDNZD</div><div style="position:absolute;right:86px;top:264px;font-size:11.5px;line-height:15px;color:#d8302a;white-space:nowrap;">1.06331</div><div style="position:absolute;right:31px;top:264px;font-size:11.5px;line-height:15px;color:#d8302a;white-space:nowrap;">1.06372</div><div style="position:absolute;right:4px;top:264px;font-size:11.5px;line-height:15px;color:#d8302a;white-space:nowrap;">41</div><div style="position:absolute;left:0;top:281px;width:221px;height:20px;background:#c4e6c0;"></div><div style="position:absolute;left:84px;top:281px;width:1px;height:20px;background:rgba(255,255,255,0.25);"></div><div style="position:absolute;left:139px;top:281px;width:1px;height:20px;background:rgba(255,255,255,0.25);"></div><div style="position:absolute;left:193px;top:281px;width:1px;height:20px;background:rgba(255,255,255,0.25);"></div><div style="position:absolute;left:0;top:300px;width:221px;height:1px;background:rgba(255,255,255,0.18);"></div><svg style="position:absolute;left:4px;top:285px" width="11" height="11"><path d="M5.5 10L10 5H7.5V1h-4v4H1z" fill="#f07040" stroke="#c03010" shape-rendering="geometricPrecision"/></svg><div style="position:absolute;left:20px;top:284px;font-size:11.5px;line-height:15px;color:#111;white-space:nowrap;letter-spacing:-0.5px;">AUDCAD</div><div style="position:absolute;right:86px;top:284px;font-size:11.5px;line-height:15px;color:#d8302a;white-space:nowrap;">1.01655</div><div style="position:absolute;right:31px;top:284px;font-size:11.5px;line-height:15px;color:#d8302a;white-space:nowrap;">1.01682</div><div style="position:absolute;right:4px;top:284px;font-size:11.5px;line-height:15px;color:#d8302a;white-space:nowrap;">27</div><div style="position:absolute;left:0;top:301px;width:221px;height:20px;background:#c4e6c0;"></div><div style="position:absolute;left:84px;top:301px;width:1px;height:20px;background:rgba(255,255,255,0.25);"></div><div style="position:absolute;left:139px;top:301px;width:1px;height:20px;background:rgba(255,255,255,0.25);"></div><div style="position:absolute;left:193px;top:301px;width:1px;height:20px;background:rgba(255,255,255,0.25);"></div><div style="position:absolute;left:0;top:320px;width:221px;height:1px;background:rgba(255,255,255,0.18);"></div><svg style="position:absolute;left:4px;top:305px" width="11" height="11"><path d="M5.5 10L10 5H7.5V1h-4v4H1z" fill="#f07040" stroke="#c03010" shape-rendering="geometricPrecision"/></svg><div style="position:absolute;left:20px;top:304px;font-size:11.5px;line-height:15px;color:#111;white-space:nowrap;letter-spacing:-0.5px;">AUDCHF</div><div style="position:absolute;right:86px;top:304px;font-size:11.5px;line-height:15px;color:#d8302a;white-space:nowrap;">0.75703</div><div style="position:absolute;right:31px;top:304px;font-size:11.5px;line-height:15px;color:#d8302a;white-space:nowrap;">0.75745</div><div style="position:absolute;right:4px;top:304px;font-size:11.5px;line-height:15px;color:#d8302a;white-space:nowrap;">42</div></div><div style="position:absolute;left:229px;top:70px;width:19px;height:338px;background:#f0f0f0;"></div><div style="position:absolute;left:230px;top:87px;width:16px;height:198px;background:#cdcdcd;"></div><svg style="position:absolute;left:233px;top:75px;" width="10" height="7" viewBox="0 0 10 7" shape-rendering="crispEdges"><path d="M1 6l4-4 4 4" stroke="#606060" stroke-width="1.8" fill="none"/></svg><svg style="position:absolute;left:233px;top:396px;" width="10" height="7" viewBox="0 0 10 7" shape-rendering="crispEdges"><path d="M1 1l4 4 4-4" stroke="#606060" stroke-width="1.8" fill="none"/></svg><div style="position:absolute;left:8px;top:408px;width:238px;height:1px;background:#000;"></div><div style="position:absolute;left:10px;top:408px;width:65px;height:23px;background:#fff;border:1px solid #000;border-top:none;box-shadow:1px 1px 0 #777;"></div><div style="position:absolute;left:20px;top:411px;font-size:12px;line-height:15px;color:#000;white-space:nowrap;">Symbols</div><div style="position:absolute;left:85px;top:411px;font-size:12px;line-height:15px;color:#777;white-space:nowrap;">Tick Chart</div><div style="position:absolute;left:150px;top:412px;width:1px;height:15px;background:#777;"></div><div style="position:absolute;left:4px;top:433px;width:247px;height:1px;background:#a0a0a0;"></div><div style="position:absolute;left:7px;top:436px;width:226px;height:14px;background:linear-gradient(90deg,#c3d1e0,#d9e4ef);"></div><div style="position:absolute;left:9px;top:435px;font-size:12px;line-height:15px;color:#0a0a0a;white-space:nowrap;">Navigator</div><svg style="position:absolute;left:237px;top:439px;" width="8" height="8" viewBox="0 0 8 8" shape-rendering="crispEdges"><path d="M1.5 1.5l5 5M6.5 1.5l-5 5" stroke="#000" stroke-width="1.6"/></svg><div style="position:absolute;left:7px;top:450px;width:241px;height:1px;background:#a8a8a8;"></div><div style="position:absolute;left:8px;top:451px;width:221px;height:98px;background:#fff;"></div><div style="position:absolute;left:229px;top:451px;width:19px;height:98px;background:#f0f0f0;"></div><div style="position:absolute;left:230px;top:495px;width:16px;height:25px;background:#cdcdcd;"></div><svg style="position:absolute;left:233px;top:457px;" width="10" height="7" viewBox="0 0 10 7" shape-rendering="crispEdges"><path d="M1 6l4-4 4 4" stroke="#606060" stroke-width="1.8" fill="none"/></svg><svg style="position:absolute;left:233px;top:537px;" width="10" height="7" viewBox="0 0 10 7" shape-rendering="crispEdges"><path d="M1 1l4 4 4-4" stroke="#606060" stroke-width="1.8" fill="none"/></svg><svg style="position:absolute;left:8px;top:450px;" width="120" height="100" viewBox="0 0 120 100" shape-rendering="crispEdges"><path d="M13.5 0V48M33.5 66V102" stroke="#888" stroke-dasharray="1 1"/><path d="M17 11h6M17 29h6M17 47h6M37 65h5M37 83h6" stroke="#888" stroke-dasharray="1 1"/><rect x="9.5" y="7.5" width="8" height="8" fill="#fff" stroke="#9a9a9a"/><path d="M11 11.5h5" stroke="#333"/><path d="M13.5 9v5" stroke="#333"/><rect x="9.5" y="25.5" width="8" height="8" fill="#fff" stroke="#9a9a9a"/><path d="M11 29.5h5" stroke="#333"/><path d="M13.5 27v5" stroke="#333"/><rect x="9.5" y="43.5" width="8" height="8" fill="#fff" stroke="#9a9a9a"/><path d="M11 47.5h5" stroke="#333"/><rect x="29.5" y="61.5" width="8" height="8" fill="#fff" stroke="#9a9a9a"/><path d="M31 65.5h5" stroke="#333"/><path d="M33.5 63v5" stroke="#333"/></svg><svg style="position:absolute;left:33px;top:452px;" width="16" height="17" viewBox="0 0 16 17" shape-rendering="crispEdges"><rect x="1.5" y="1.5" width="13" height="13" rx="2" fill="#f6dc6a" stroke="#c0a030"/><text x="5" y="12" font-size="11" font-style="italic" font-family="Liberation Serif" fill="#8a5a00">f</text></svg><svg style="position:absolute;left:31px;top:470px;" width="18" height="17" viewBox="0 0 18 17" shape-rendering="crispEdges"><ellipse cx="9" cy="6" rx="8" ry="4" fill="#5aaee8" stroke="#2a70b0" shape-rendering="geometricPrecision"/><path d="M4 7l5 5 3-3" fill="#e8c850" stroke="#a08020"/><path d="M11 11l3 3 3-3-3-3z" fill="#e8c040" stroke="#8a6a10"/></svg><svg style="position:absolute;left:33px;top:488px;" width="16" height="18" viewBox="0 0 16 18" shape-rendering="crispEdges"><path d="M3 1h9v2H3zM4 3h7v9H4zM3 12h9v2H3z" fill="#f0d870" stroke="#a8901c" stroke-width="0.8"/><path d="M6 5h3M6 8h3" stroke="#a8901c"/><path d="M11 11l3 3-3 3-3-3z" fill="#e8c040" stroke="#8a6a10"/></svg><svg style="position:absolute;left:54px;top:506px;" width="16" height="18" viewBox="0 0 16 18" shape-rendering="crispEdges"><path d="M3 1h9v2H3zM4 3h7v9H4zM3 12h9v2H3z" fill="#f0d870" stroke="#a8901c" stroke-width="0.8"/><path d="M6 5h3M6 8h3" stroke="#a8901c"/><path d="M11 11l3 3-3 3-3-3z" fill="#e8c040" stroke="#8a6a10"/></svg><svg style="position:absolute;left:54px;top:524px;" width="16" height="18" viewBox="0 0 16 18" shape-rendering="crispEdges"><path d="M3 1h9v2H3zM4 3h7v9H4zM3 12h9v2H3z" fill="#f0d870" stroke="#a8901c" stroke-width="0.8"/><path d="M6 5h3M6 8h3" stroke="#a8901c"/><path d="M11 11l3 3-3 3-3-3z" fill="#e8c040" stroke="#8a6a10"/></svg><div style="position:absolute;left:54px;top:542px;width:100px;height:7px;overflow:hidden;"><svg style="position:absolute;left:0;top:0" width="16" height="18"><path d="M3 1h9v2H3zM4 3h7v9H4zM3 12h9v2H3z" fill="#f0d870" stroke="#a8901c" stroke-width="0.8"/><path d="M6 5h3M6 8h3" stroke="#a8901c"/><path d="M11 11l3 3-3 3-3-3z" fill="#e8c040" stroke="#8a6a10"/></svg><div style="position:absolute;left:23px;top:1px;font-size:12px;line-height:15px;">PeriodConverter</div></div><div style="position:absolute;left:56px;top:454px;font-size:12px;line-height:15px;color:#000;white-space:nowrap;">Indicators</div><div style="position:absolute;left:56px;top:472px;font-size:12px;line-height:15px;color:#000;white-space:nowrap;">Expert Advisors</div><div style="position:absolute;left:56px;top:490px;font-size:12px;line-height:15px;color:#000;white-space:nowrap;">Scripts</div><div style="position:absolute;left:77px;top:508px;font-size:12px;line-height:15px;color:#000;white-space:nowrap;">Examples</div><div style="position:absolute;left:77px;top:526px;font-size:12px;line-height:15px;color:#000;white-space:nowrap;">Demo-1</div><div style="position:absolute;left:8px;top:549px;width:238px;height:1px;background:#000;"></div><div style="position:absolute;left:10px;top:549px;width:71px;height:23px;background:#fff;border:1px solid #000;border-top:none;box-shadow:1px 1px 0 #777;"></div><div style="position:absolute;left:20px;top:552px;font-size:12px;line-height:15px;color:#000;white-space:nowrap;">Common</div><div style="position:absolute;left:91px;top:552px;font-size:12px;line-height:15px;color:#777;white-space:nowrap;">Favorites</div><div style="position:absolute;left:148px;top:553px;width:1px;height:15px;background:#777;"></div><div style="position:absolute;left:4px;top:573px;width:247px;height:1px;background:#c8c8c8;"></div><div style="position:absolute;left:251px;top:54px;width:1142px;height:502px;background:#7a7a7a;"></div><div style="position:absolute;left:1390px;top:54px;width:3px;height:498px;background:#e6edf4;"></div><div style="position:absolute;left:251px;top:54px;width:2px;height:502px;background:#6a6a6a;"></div><div style="position:absolute;left:252px;top:54px;width:569px;height:498px;background:#d0dce8;border:1px solid #60676f;border-radius:6px 6px 0 0;"></div><div style="position:absolute;left:253px;top:55px;width:567px;height:31px;background:linear-gradient(#cbd7e4,#d5e0eb);border-radius:5px 5px 0 0;"></div><svg style="position:absolute;left:263px;top:66px;" width="15" height="15" viewBox="0 0 15 15" shape-rendering="crispEdges"><rect x="0.5" y="0.5" width="9" height="7" fill="#e8f4ff" stroke="#4a7ab8"/><rect x="4.5" y="5.5" width="10" height="9" fill="#e8f4ff" stroke="#4a7ab8"/><path d="M2 4l2-2 2 2M6 10l1.5 2 2-3 2 3" stroke="#4a7ab8" fill="none"/></svg><div style="position:absolute;left:283px;top:66px;font-size:11.5px;line-height:14.5px;color:#8a96a4;white-space:nowrap;letter-spacing:-0.6px;">EURUSD,H1</div><div style="position:absolute;left:711px;top:64px;width:32px;height:18px;background:linear-gradient(#dfe7f0,#d2dde9);border:1px solid #9aa6b4;border-radius:3px;"></div><svg style="position:absolute;left:721px;top:71px;" width="12" height="6" viewBox="0 0 12 6" shape-rendering="crispEdges"><rect x="0.5" y="0.5" width="10" height="4" rx="1" fill="#fff" stroke="#555"/></svg><div style="position:absolute;left:745px;top:64px;width:32px;height:18px;background:linear-gradient(#dfe7f0,#d2dde9);border:1px solid #9aa6b4;border-radius:3px;"></div><svg style="position:absolute;left:755px;top:68px;" width="12" height="11" viewBox="0 0 12 11" shape-rendering="crispEdges"><rect x="0.5" y="0.5" width="10" height="9" rx="1" fill="#fff" stroke="#555"/><rect x="3" y="3.5" width="5" height="3" fill="#fff" stroke="#555"/></svg><div style="position:absolute;left:779px;top:64px;width:32px;height:18px;background:linear-gradient(#dfe7f0,#d2dde9);border:1px solid #9aa6b4;border-radius:3px;"></div><svg style="position:absolute;left:788px;top:67px;" width="14" height="12" viewBox="0 0 14 12" shape-rendering="crispEdges"><path d="M2 1.5l10 9M12 1.5l-10 9" stroke="#555" stroke-width="4" shape-rendering="geometricPrecision"/><path d="M2 1.5l10 9M12 1.5l-10 9" stroke="#fff" stroke-width="2" shape-rendering="geometricPrecision"/></svg><div style="position:absolute;left:260px;top:85px;width:553px;height:460px;background:#fff;border-top:2px solid #8f969e;border-left:2px solid #8f969e;border-right:1px solid #e8eef4;border-bottom:1px solid #e8eef4;"></div><svg style="position:absolute;left:262px;top:87px" width="549" height="456" viewBox="262 87 549 456" shape-rendering="crispEdges"><line x1="297.5" y1="89" x2="297.5" y2="522" stroke="#c0c0c0" stroke-dasharray="3 3"/><line x1="329.5" y1="89" x2="329.5" y2="522" stroke="#c0c0c0" stroke-dasharray="3 3"/><line x1="361.5" y1="89" x2="361.5" y2="522" stroke="#c0c0c0" stroke-dasharray="3 3"/><line x1="393.5" y1="89" x2="393.5" y2="522" stroke="#c0c0c0" stroke-dasharray="3 3"/><line x1="425.5" y1="89" x2="425.5" y2="522" stroke="#c0c0c0" stroke-dasharray="3 3"/><line x1="457.5" y1="89" x2="457.5" y2="522" stroke="#c0c0c0" stroke-dasharray="3 3"/><line x1="489.5" y1="89" x2="489.5" y2="522" stroke="#c0c0c0" stroke-dasharray="3 3"/><line x1="521.5" y1="89" x2="521.5" y2="522" stroke="#c0c0c0" stroke-dasharray="3 3"/><line x1="553.5" y1="89" x2="553.5" y2="522" stroke="#c0c0c0" stroke-dasharray="3 3"/><line x1="585.5" y1="89" x2="585.5" y2="522" stroke="#c0c0c0" stroke-dasharray="3 3"/><line x1="617.5" y1="89" x2="617.5" y2="522" stroke="#c0c0c0" stroke-dasharray="3 3"/><line x1="649.5" y1="89" x2="649.5" y2="522" stroke="#c0c0c0" stroke-dasharray="3 3"/><line x1="681.5" y1="89" x2="681.5" y2="522" stroke="#c0c0c0" stroke-dasharray="3 3"/><line x1="713.5" y1="89" x2="713.5" y2="522" stroke="#c0c0c0" stroke-dasharray="3 3"/><line x1="745.5" y1="89" x2="745.5" y2="522" stroke="#c0c0c0" stroke-dasharray="3 3"/><line x1="266" y1="123.5" x2="768" y2="123.5" stroke="#c0c0c0" stroke-dasharray="3 3"/><line x1="266" y1="156.5" x2="768" y2="156.5" stroke="#c0c0c0" stroke-dasharray="3 3"/><line x1="266" y1="189.5" x2="768" y2="189.5" stroke="#c0c0c0" stroke-dasharray="3 3"/><line x1="266" y1="222.5" x2="768" y2="222.5" stroke="#c0c0c0" stroke-dasharray="3 3"/><line x1="266" y1="255.5" x2="768" y2="255.5" stroke="#c0c0c0" stroke-dasharray="3 3"/><line x1="266" y1="288.5" x2="768" y2="288.5" stroke="#c0c0c0" stroke-dasharray="3 3"/><line x1="266" y1="321.5" x2="768" y2="321.5" stroke="#c0c0c0" stroke-dasharray="3 3"/><line x1="266" y1="354.5" x2="768" y2="354.5" stroke="#c0c0c0" stroke-dasharray="3 3"/><line x1="266" y1="387.5" x2="768" y2="387.5" stroke="#c0c0c0" stroke-dasharray="3 3"/><line x1="266" y1="420.5" x2="768" y2="420.5" stroke="#c0c0c0" stroke-dasharray="3 3"/><line x1="266" y1="453.5" x2="768" y2="453.5" stroke="#c0c0c0" stroke-dasharray="3 3"/><line x1="266" y1="486.5" x2="768" y2="486.5" stroke="#c0c0c0" stroke-dasharray="3 3"/><line x1="266" y1="519.5" x2="768" y2="519.5" stroke="#c0c0c0" stroke-dasharray="3 3"/><rect x="264.5" y="89.5" width="504" height="433" fill="none" stroke="#000"/><line x1="768" y1="123.5" x2="772" y2="123.5" stroke="#000"/><text x="775" y="127" font-size="10" font-family="Liberation Sans" letter-spacing="-0.5" fill="#000">1.10345</text><line x1="768" y1="156.5" x2="772" y2="156.5" stroke="#000"/><text x="775" y="160" font-size="10" font-family="Liberation Sans" letter-spacing="-0.5" fill="#000">1.10195</text><line x1="768" y1="189.5" x2="772" y2="189.5" stroke="#000"/><text x="775" y="193" font-size="10" font-family="Liberation Sans" letter-spacing="-0.5" fill="#000">1.10045</text><line x1="768" y1="222.5" x2="772" y2="222.5" stroke="#000"/><text x="775" y="226" font-size="10" font-family="Liberation Sans" letter-spacing="-0.5" fill="#000">1.09895</text><line x1="768" y1="255.5" x2="772" y2="255.5" stroke="#000"/><text x="775" y="259" font-size="10" font-family="Liberation Sans" letter-spacing="-0.5" fill="#000">1.09745</text><line x1="768" y1="288.5" x2="772" y2="288.5" stroke="#000"/><text x="775" y="292" font-size="10" font-family="Liberation Sans" letter-spacing="-0.5" fill="#000">1.09595</text><line x1="768" y1="321.5" x2="772" y2="321.5" stroke="#000"/><text x="775" y="325" font-size="10" font-family="Liberation Sans" letter-spacing="-0.5" fill="#000">1.09445</text><line x1="768" y1="354.5" x2="772" y2="354.5" stroke="#000"/><text x="775" y="358" font-size="10" font-family="Liberation Sans" letter-spacing="-0.5" fill="#000">1.09300</text><line x1="768" y1="387.5" x2="772" y2="387.5" stroke="#000"/><text x="775" y="391" font-size="10" font-family="Liberation Sans" letter-spacing="-0.5" fill="#000">1.09150</text><line x1="768" y1="420.5" x2="772" y2="420.5" stroke="#000"/><text x="775" y="424" font-size="10" font-family="Liberation Sans" letter-spacing="-0.5" fill="#000">1.09000</text><line x1="768" y1="453.5" x2="772" y2="453.5" stroke="#000"/><text x="775" y="457" font-size="10" font-family="Liberation Sans" letter-spacing="-0.5" fill="#000">1.08850</text><line x1="768" y1="486.5" x2="772" y2="486.5" stroke="#000"/><text x="775" y="490" font-size="10" font-family="Liberation Sans" letter-spacing="-0.5" fill="#000">1.08700</text><line x1="768" y1="519.5" x2="772" y2="519.5" stroke="#000"/><text x="775" y="523" font-size="10" font-family="Liberation Sans" letter-spacing="-0.5" fill="#000">1.08550</text><line x1="265.5" y1="522" x2="265.5" y2="527" stroke="#000"/><text x="265" y="536" font-size="10" font-family="Liberation Sans" letter-spacing="-0.45" fill="#000">19 Oct 2016</text><line x1="329.5" y1="522" x2="329.5" y2="527" stroke="#000"/><text x="328" y="536" font-size="10" font-family="Liberation Sans" letter-spacing="-0.45" fill="#000">20 Oct 00:00</text><line x1="393.5" y1="522" x2="393.5" y2="527" stroke="#000"/><text x="392" y="536" font-size="10" font-family="Liberation Sans" letter-spacing="-0.45" fill="#000">20 Oct 08:00</text><line x1="457.5" y1="522" x2="457.5" y2="527" stroke="#000"/><text x="456" y="536" font-size="10" font-family="Liberation Sans" letter-spacing="-0.45" fill="#000">20 Oct 16:00</text><line x1="521.5" y1="522" x2="521.5" y2="527" stroke="#000"/><text x="520" y="536" font-size="10" font-family="Liberation Sans" letter-spacing="-0.45" fill="#000">21 Oct 00:00</text><line x1="585.5" y1="522" x2="585.5" y2="527" stroke="#000"/><text x="584" y="536" font-size="10" font-family="Liberation Sans" letter-spacing="-0.45" fill="#000">21 Oct 08:00</text><line x1="649.5" y1="522" x2="649.5" y2="527" stroke="#000"/><text x="648" y="536" font-size="10" font-family="Liberation Sans" letter-spacing="-0.45" fill="#000">21 Oct 16:00</text><line x1="713.5" y1="522" x2="713.5" y2="527" stroke="#000"/><text x="712" y="536" font-size="10" font-family="Liberation Sans" letter-spacing="-0.45" fill="#000">24 Oct 00:00</text><line x1="265" y1="399.5" x2="768" y2="399.5" stroke="#e2572c" stroke-dasharray="8 6 3 7"/><line x1="265" y1="446.5" x2="768" y2="446.5" stroke="#e2572c" stroke-dasharray="8 6 3 7"/><line x1="265" y1="487.5" x2="768" y2="487.5" stroke="#1e7a1e" stroke-dasharray="8 6 3 7"/><line x1="265" y1="490.5" x2="768" y2="490.5" stroke="#1e7a1e" stroke-dasharray="8 6 3 7"/><line x1="265" y1="495.5" x2="768" y2="495.5" stroke="#b8b8b8"/><rect x="265" y="264" width="1" height="23" fill="#007800"/><rect x="265" y="271" width="3" height="7" fill="#007800"/><rect x="273" y="263" width="1" height="22" fill="#f00000"/><rect x="271" y="272" width="5" height="9" fill="#f00000"/><rect x="281" y="267" width="1" height="22" fill="#007800"/><rect x="279" y="271" width="5" height="10" fill="#007800"/><rect x="289" y="265" width="1" height="16" fill="#007800"/><rect x="287" y="266" width="5" height="8" fill="#007800"/><rect x="297" y="256" width="1" height="16" fill="#007800"/><rect x="295" y="260" width="5" height="9" fill="#007800"/><rect x="305" y="255" width="1" height="11" fill="#007800"/><rect x="303" y="257" width="5" height="5" fill="#007800"/><rect x="313" y="246" width="1" height="14" fill="#007800"/><rect x="311" y="247" width="5" height="12" fill="#007800"/><rect x="321" y="243" width="1" height="19" fill="#f00000"/><rect x="319" y="247" width="5" height="11" fill="#f00000"/><rect x="329" y="252" width="1" height="27" fill="#f00000"/><rect x="327" y="257" width="5" height="12" fill="#f00000"/><rect x="337" y="252" width="1" height="28" fill="#007800"/><rect x="335" y="256" width="5" height="13" fill="#007800"/><rect x="345" y="245" width="1" height="19" fill="#007800"/><rect x="343" y="248" width="5" height="10" fill="#007800"/><rect x="353" y="245" width="1" height="22" fill="#f00000"/><rect x="351" y="248" width="5" height="18" fill="#f00000"/><rect x="361" y="260" width="1" height="26" fill="#f00000"/><rect x="359" y="263" width="5" height="21" fill="#f00000"/><rect x="369" y="278" width="1" height="24" fill="#f00000"/><rect x="367" y="282" width="5" height="5" fill="#f00000"/><rect x="377" y="262" width="1" height="45" fill="#007800"/><rect x="375" y="275" width="5" height="12" fill="#007800"/><rect x="385" y="249" width="1" height="41" fill="#007800"/><rect x="383" y="255" width="5" height="22" fill="#007800"/><rect x="393" y="246" width="1" height="21" fill="#f00000"/><rect x="391" y="255" width="5" height="8" fill="#f00000"/><rect x="401" y="253" width="1" height="34" fill="#f00000"/><rect x="399" y="261" width="5" height="14" fill="#f00000"/><rect x="409" y="253" width="1" height="24" fill="#007800"/><rect x="407" y="255" width="5" height="21" fill="#007800"/><rect x="417" y="227" width="1" height="31" fill="#007800"/><rect x="415" y="252" width="5" height="6" fill="#007800"/><rect x="425" y="112" width="1" height="169" fill="#007800"/><rect x="423" y="249" width="5" height="5" fill="#007800"/><rect x="433" y="238" width="1" height="108" fill="#f00000"/><rect x="431" y="249" width="5" height="65" fill="#f00000"/><rect x="441" y="304" width="1" height="83" fill="#f00000"/><rect x="439" y="313" width="5" height="55" fill="#f00000"/><rect x="449" y="341" width="1" height="46" fill="#007800"/><rect x="447" y="346" width="5" height="21" fill="#007800"/><rect x="457" y="320" width="1" height="39" fill="#007800"/><rect x="455" y="322" width="5" height="27" fill="#007800"/><rect x="465" y="319" width="1" height="30" fill="#f00000"/><rect x="463" y="322" width="5" height="27" fill="#f00000"/><rect x="473" y="343" width="1" height="24" fill="#f00000"/><rect x="471" y="346" width="5" height="19" fill="#f00000"/><rect x="481" y="358" width="1" height="8" fill="#007800"/><rect x="479" y="361" width="5" height="4" fill="#007800"/><rect x="489" y="355" width="1" height="16" fill="#007800"/><rect x="487" y="356" width="5" height="7" fill="#007800"/><rect x="497" y="355" width="1" height="18" fill="#f00000"/><rect x="495" y="356" width="5" height="14" fill="#f00000"/><rect x="505" y="356" width="1" height="13" fill="#007800"/><rect x="503" y="359" width="5" height="10" fill="#007800"/><rect x="513" y="354" width="1" height="12" fill="#007800"/><rect x="511" y="356" width="5" height="5" fill="#007800"/><rect x="521" y="355" width="1" height="25" fill="#f00000"/><rect x="519" y="356" width="5" height="22" fill="#f00000"/><rect x="529" y="371" width="1" height="29" fill="#f00000"/><rect x="527" y="376" width="5" height="24" fill="#f00000"/><rect x="537" y="398" width="1" height="34" fill="#f00000"/><rect x="535" y="398" width="5" height="24" fill="#f00000"/><rect x="545" y="406" width="1" height="24" fill="#007800"/><rect x="543" y="411" width="5" height="11" fill="#007800"/><rect x="553" y="404" width="1" height="16" fill="#f00000"/><rect x="551" y="411" width="5" height="5" fill="#f00000"/><rect x="561" y="407" width="1" height="23" fill="#007800"/><rect x="559" y="409" width="5" height="8" fill="#007800"/><rect x="569" y="394" width="1" height="28" fill="#007800"/><rect x="567" y="403" width="5" height="8" fill="#007800"/><rect x="577" y="402" width="1" height="61" fill="#f00000"/><rect x="575" y="403" width="5" height="60" fill="#f00000"/><rect x="585" y="444" width="1" height="28" fill="#f00000"/><rect x="583" y="461" width="5" height="5" fill="#f00000"/><rect x="593" y="412" width="1" height="59" fill="#007800"/><rect x="591" y="416" width="5" height="49" fill="#007800"/><rect x="601" y="417" width="1" height="28" fill="#f00000"/><rect x="599" y="417" width="5" height="26" fill="#f00000"/><rect x="609" y="435" width="1" height="16" fill="#f00000"/><rect x="607" y="441" width="5" height="5" fill="#f00000"/><rect x="617" y="444" width="1" height="41" fill="#f00000"/><rect x="615" y="445" width="5" height="38" fill="#f00000"/><rect x="625" y="461" width="1" height="31" fill="#007800"/><rect x="623" y="480" width="5" height="3" fill="#007800"/><rect x="633" y="458" width="1" height="34" fill="#f00000"/><rect x="631" y="481" width="5" height="5" fill="#f00000"/><rect x="641" y="470" width="1" height="41" fill="#f00000"/><rect x="639" y="483" width="5" height="15" fill="#f00000"/><rect x="649" y="476" width="1" height="30" fill="#007800"/><rect x="647" y="478" width="5" height="20" fill="#007800"/><rect x="657" y="478" width="1" height="33" fill="#f00000"/><rect x="655" y="478" width="5" height="24" fill="#f00000"/><rect x="665" y="476" width="1" height="29" fill="#007800"/><rect x="663" y="479" width="5" height="22" fill="#007800"/><rect x="673" y="462" width="1" height="30" fill="#007800"/><rect x="671" y="463" width="5" height="17" fill="#007800"/><rect x="681" y="444" width="1" height="25" fill="#007800"/><rect x="679" y="454" width="5" height="11" fill="#007800"/><rect x="689" y="460" width="1" height="21" fill="#f00000"/><rect x="687" y="464" width="5" height="4" fill="#f00000"/><rect x="697" y="455" width="1" height="15" fill="#f00000"/><rect x="695" y="466" width="5" height="4" fill="#f00000"/><rect x="705" y="455" width="1" height="16" fill="#007800"/><rect x="703" y="465" width="5" height="5" fill="#007800"/><rect x="713" y="456" width="1" height="22" fill="#f00000"/><rect x="711" y="465" width="5" height="13" fill="#f00000"/><rect x="721" y="474" width="1" height="37" fill="#f00000"/><rect x="719" y="476" width="5" height="35" fill="#f00000"/><rect x="729" y="497" width="1" height="14" fill="#007800"/><rect x="727" y="503" width="5" height="8" fill="#007800"/><rect x="737" y="484" width="1" height="21" fill="#007800"/><rect x="735" y="491" width="5" height="13" fill="#007800"/><rect x="745" y="484" width="1" height="16" fill="#f00000"/><rect x="743" y="492" width="5" height="5" fill="#f00000"/><text x="272" y="397" font-size="10" font-family="Liberation Sans" letter-spacing="-0.4" fill="#222">#35087062 tp</text><text x="272" y="444" font-size="10" font-family="Liberation Sans" letter-spacing="-0.4" fill="#222">#35087063 sl</text><text x="272" y="486" font-size="10" font-family="Liberation Sans" letter-spacing="-0.4" fill="#222">#35087062 buy 0.01</text><text x="272" y="488" font-size="10" font-family="Liberation Sans" letter-spacing="-0.4" fill="#222">#35087063 sell 0.01</text><text x="279" y="102" font-size="10" font-family="Liberation Sans" letter-spacing="-0.25" xml:space="preserve" fill="#000">EURUSD,H1  1.08675 1.08710 1.08649 1.08659</text><path d="M268 96h7l-3.5 4z" fill="#000"/><rect x="769" y="490" width="43" height="11" fill="#000"/><text x="773" y="499" font-size="10" font-family="Liberation Sans" letter-spacing="-0.3" fill="#fff">1.08659</text></svg><div style="position:absolute;left:821px;top:54px;width:569px;height:498px;background:#b9d0e9;border:1px solid #3d4b5a;border-radius:6px 6px 0 0;"></div><div style="position:absolute;left:822px;top:55px;width:567px;height:31px;background:linear-gradient(#a9c3e0,#bcd2ea);border-radius:5px 5px 0 0;"></div><svg style="position:absolute;left:832px;top:66px;" width="15" height="15" viewBox="0 0 15 15" shape-rendering="crispEdges"><rect x="0.5" y="0.5" width="9" height="7" fill="#e8f4ff" stroke="#4a7ab8"/><rect x="4.5" y="5.5" width="10" height="9" fill="#e8f4ff" stroke="#4a7ab8"/><path d="M2 4l2-2 2 2M6 10l1.5 2 2-3 2 3" stroke="#4a7ab8" fill="none"/></svg><div style="position:absolute;left:852px;top:66px;font-size:11.5px;line-height:14.5px;color:#222;white-space:nowrap;letter-spacing:-0.6px;">USDJPY,H1</div><div style="position:absolute;left:1280px;top:64px;width:32px;height:18px;background:linear-gradient(#cfe0f2 0%,#b8cfe8 45%,#9fb9d8 50%,#b0c8e4 100%);border:1px solid #5d7290;border-radius:3px;"></div><svg style="position:absolute;left:1290px;top:71px;" width="12" height="6" viewBox="0 0 12 6" shape-rendering="crispEdges"><rect x="0.5" y="0.5" width="10" height="4" rx="1" fill="#fff" stroke="#333"/></svg><div style="position:absolute;left:1314px;top:64px;width:32px;height:18px;background:linear-gradient(#cfe0f2 0%,#b8cfe8 45%,#9fb9d8 50%,#b0c8e4 100%);border:1px solid #5d7290;border-radius:3px;"></div><svg style="position:absolute;left:1324px;top:68px;" width="12" height="11" viewBox="0 0 12 11" shape-rendering="crispEdges"><rect x="0.5" y="0.5" width="10" height="9" rx="1" fill="#fff" stroke="#333"/><rect x="3" y="3.5" width="5" height="3" fill="#fff" stroke="#333"/></svg><div style="position:absolute;left:1348px;top:64px;width:32px;height:18px;background:linear-gradient(#e7a89a 0%,#d87a66 45%,#c24a30 50%,#d06048 100%);border:1px solid #6a2a20;border-radius:3px;"></div><svg style="position:absolute;left:1357px;top:67px;" width="14" height="12" viewBox="0 0 14 12" shape-rendering="crispEdges"><path d="M2 1.5l10 9M12 1.5l-10 9" stroke="#333" stroke-width="4" shape-rendering="geometricPrecision"/><path d="M2 1.5l10 9M12 1.5l-10 9" stroke="#fff" stroke-width="2" shape-rendering="geometricPrecision"/></svg><div style="position:absolute;left:829px;top:85px;width:553px;height:460px;background:#fff;border-top:2px solid #8f969e;border-left:2px solid #8f969e;border-right:1px solid #e8eef4;border-bottom:1px solid #e8eef4;"></div><svg style="position:absolute;left:831px;top:87px" width="549" height="456" viewBox="831 87 549 456" shape-rendering="crispEdges"><line x1="866.5" y1="89" x2="866.5" y2="522" stroke="#c0c0c0" stroke-dasharray="3 3"/><line x1="898.5" y1="89" x2="898.5" y2="522" stroke="#c0c0c0" stroke-dasharray="3 3"/><line x1="930.5" y1="89" x2="930.5" y2="522" stroke="#c0c0c0" stroke-dasharray="3 3"/><line x1="962.5" y1="89" x2="962.5" y2="522" stroke="#c0c0c0" stroke-dasharray="3 3"/><line x1="994.5" y1="89" x2="994.5" y2="522" stroke="#c0c0c0" stroke-dasharray="3 3"/><line x1="1026.5" y1="89" x2="1026.5" y2="522" stroke="#c0c0c0" stroke-dasharray="3 3"/><line x1="1058.5" y1="89" x2="1058.5" y2="522" stroke="#c0c0c0" stroke-dasharray="3 3"/><line x1="1090.5" y1="89" x2="1090.5" y2="522" stroke="#c0c0c0" stroke-dasharray="3 3"/><line x1="1122.5" y1="89" x2="1122.5" y2="522" stroke="#c0c0c0" stroke-dasharray="3 3"/><line x1="1154.5" y1="89" x2="1154.5" y2="522" stroke="#c0c0c0" stroke-dasharray="3 3"/><line x1="1186.5" y1="89" x2="1186.5" y2="522" stroke="#c0c0c0" stroke-dasharray="3 3"/><line x1="1218.5" y1="89" x2="1218.5" y2="522" stroke="#c0c0c0" stroke-dasharray="3 3"/><line x1="1250.5" y1="89" x2="1250.5" y2="522" stroke="#c0c0c0" stroke-dasharray="3 3"/><line x1="1282.5" y1="89" x2="1282.5" y2="522" stroke="#c0c0c0" stroke-dasharray="3 3"/><line x1="1314.5" y1="89" x2="1314.5" y2="522" stroke="#c0c0c0" stroke-dasharray="3 3"/><line x1="835" y1="118.5" x2="1337" y2="118.5" stroke="#c0c0c0" stroke-dasharray="3 3"/><line x1="835" y1="152.5" x2="1337" y2="152.5" stroke="#c0c0c0" stroke-dasharray="3 3"/><line x1="835" y1="185.5" x2="1337" y2="185.5" stroke="#c0c0c0" stroke-dasharray="3 3"/><line x1="835" y1="218.5" x2="1337" y2="218.5" stroke="#c0c0c0" stroke-dasharray="3 3"/><line x1="835" y1="252.5" x2="1337" y2="252.5" stroke="#c0c0c0" stroke-dasharray="3 3"/><line x1="835" y1="285.5" x2="1337" y2="285.5" stroke="#c0c0c0" stroke-dasharray="3 3"/><line x1="835" y1="319.5" x2="1337" y2="319.5" stroke="#c0c0c0" stroke-dasharray="3 3"/><line x1="835" y1="352.5" x2="1337" y2="352.5" stroke="#c0c0c0" stroke-dasharray="3 3"/><line x1="835" y1="385.5" x2="1337" y2="385.5" stroke="#c0c0c0" stroke-dasharray="3 3"/><line x1="835" y1="419.5" x2="1337" y2="419.5" stroke="#c0c0c0" stroke-dasharray="3 3"/><line x1="835" y1="452.5" x2="1337" y2="452.5" stroke="#c0c0c0" stroke-dasharray="3 3"/><line x1="835" y1="486.5" x2="1337" y2="486.5" stroke="#c0c0c0" stroke-dasharray="3 3"/><line x1="835" y1="519.5" x2="1337" y2="519.5" stroke="#c0c0c0" stroke-dasharray="3 3"/><rect x="833.5" y="89.5" width="504" height="433" fill="none" stroke="#000"/><line x1="1337" y1="118.5" x2="1341" y2="118.5" stroke="#000"/><text x="1344" y="122" font-size="10" font-family="Liberation Sans" letter-spacing="-0.5" fill="#000">104.185</text><line x1="1337" y1="152.5" x2="1341" y2="152.5" stroke="#000"/><text x="1344" y="156" font-size="10" font-family="Liberation Sans" letter-spacing="-0.5" fill="#000">104.105</text><line x1="1337" y1="185.5" x2="1341" y2="185.5" stroke="#000"/><text x="1344" y="189" font-size="10" font-family="Liberation Sans" letter-spacing="-0.5" fill="#000">104.025</text><line x1="1337" y1="218.5" x2="1341" y2="218.5" stroke="#000"/><text x="1344" y="222" font-size="10" font-family="Liberation Sans" letter-spacing="-0.5" fill="#000">103.945</text><line x1="1337" y1="252.5" x2="1341" y2="252.5" stroke="#000"/><text x="1344" y="256" font-size="10" font-family="Liberation Sans" letter-spacing="-0.5" fill="#000">103.865</text><line x1="1337" y1="285.5" x2="1341" y2="285.5" stroke="#000"/><text x="1344" y="289" font-size="10" font-family="Liberation Sans" letter-spacing="-0.5" fill="#000">103.785</text><line x1="1337" y1="319.5" x2="1341" y2="319.5" stroke="#000"/><text x="1344" y="323" font-size="10" font-family="Liberation Sans" letter-spacing="-0.5" fill="#000">103.705</text><line x1="1337" y1="352.5" x2="1341" y2="352.5" stroke="#000"/><text x="1344" y="356" font-size="10" font-family="Liberation Sans" letter-spacing="-0.5" fill="#000">103.625</text><line x1="1337" y1="385.5" x2="1341" y2="385.5" stroke="#000"/><text x="1344" y="389" font-size="10" font-family="Liberation Sans" letter-spacing="-0.5" fill="#000">103.545</text><line x1="1337" y1="419.5" x2="1341" y2="419.5" stroke="#000"/><text x="1344" y="423" font-size="10" font-family="Liberation Sans" letter-spacing="-0.5" fill="#000">103.465</text><line x1="1337" y1="452.5" x2="1341" y2="452.5" stroke="#000"/><text x="1344" y="456" font-size="10" font-family="Liberation Sans" letter-spacing="-0.5" fill="#000">103.385</text><line x1="1337" y1="486.5" x2="1341" y2="486.5" stroke="#000"/><text x="1344" y="490" font-size="10" font-family="Liberation Sans" letter-spacing="-0.5" fill="#000">103.305</text><line x1="1337" y1="519.5" x2="1341" y2="519.5" stroke="#000"/><text x="1344" y="523" font-size="10" font-family="Liberation Sans" letter-spacing="-0.5" fill="#000">103.225</text><line x1="834.5" y1="522" x2="834.5" y2="527" stroke="#000"/><text x="834" y="536" font-size="10" font-family="Liberation Sans" letter-spacing="-0.45" fill="#000">19 Oct 2016</text><line x1="898.5" y1="522" x2="898.5" y2="527" stroke="#000"/><text x="897" y="536" font-size="10" font-family="Liberation Sans" letter-spacing="-0.45" fill="#000">20 Oct 00:00</text><line x1="962.5" y1="522" x2="962.5" y2="527" stroke="#000"/><text x="961" y="536" font-size="10" font-family="Liberation Sans" letter-spacing="-0.45" fill="#000">20 Oct 08:00</text><line x1="1026.5" y1="522" x2="1026.5" y2="527" stroke="#000"/><text x="1025" y="536" font-size="10" font-family="Liberation Sans" letter-spacing="-0.45" fill="#000">20 Oct 16:00</text><line x1="1090.5" y1="522" x2="1090.5" y2="527" stroke="#000"/><text x="1089" y="536" font-size="10" font-family="Liberation Sans" letter-spacing="-0.45" fill="#000">21 Oct 00:00</text><line x1="1154.5" y1="522" x2="1154.5" y2="527" stroke="#000"/><text x="1153" y="536" font-size="10" font-family="Liberation Sans" letter-spacing="-0.45" fill="#000">21 Oct 08:00</text><line x1="1218.5" y1="522" x2="1218.5" y2="527" stroke="#000"/><text x="1217" y="536" font-size="10" font-family="Liberation Sans" letter-spacing="-0.45" fill="#000">21 Oct 16:00</text><line x1="1282.5" y1="522" x2="1282.5" y2="527" stroke="#000"/><text x="1281" y="536" font-size="10" font-family="Liberation Sans" letter-spacing="-0.45" fill="#000">24 Oct 00:00</text><line x1="834" y1="141.5" x2="1337" y2="141.5" stroke="#e2572c" stroke-dasharray="8 6 3 7"/><line x1="834" y1="218.5" x2="1337" y2="218.5" stroke="#1e7a1e" stroke-dasharray="8 6 3 7"/><line x1="834" y1="225.5" x2="1337" y2="225.5" stroke="#1e7a1e" stroke-dasharray="8 6 3 7"/><line x1="834" y1="302.5" x2="1337" y2="302.5" stroke="#e2572c" stroke-dasharray="8 6 3 7"/><line x1="834" y1="392.5" x2="1337" y2="392.5" stroke="#e2572c" stroke-dasharray="8 6 3 7"/><line x1="834" y1="224.5" x2="1337" y2="224.5" stroke="#b8b8b8"/><rect x="834" y="466" width="1" height="46" fill="#f00000"/><rect x="834" y="491" width="3" height="15" fill="#f00000"/><rect x="842" y="460" width="1" height="42" fill="#007800"/><rect x="840" y="468" width="5" height="34" fill="#007800"/><rect x="850" y="437" width="1" height="47" fill="#007800"/><rect x="848" y="445" width="5" height="24" fill="#007800"/><rect x="858" y="404" width="1" height="63" fill="#007800"/><rect x="856" y="438" width="5" height="9" fill="#007800"/><rect x="866" y="427" width="1" height="17" fill="#007800"/><rect x="864" y="431" width="5" height="9" fill="#007800"/><rect x="874" y="428" width="1" height="42" fill="#f00000"/><rect x="872" y="435" width="5" height="18" fill="#f00000"/><rect x="882" y="443" width="1" height="30" fill="#f00000"/><rect x="880" y="452" width="5" height="8" fill="#f00000"/><rect x="890" y="444" width="1" height="29" fill="#007800"/><rect x="888" y="450" width="5" height="10" fill="#007800"/><rect x="898" y="339" width="1" height="106" fill="#007800"/><rect x="896" y="359" width="5" height="86" fill="#007800"/><rect x="906" y="336" width="1" height="49" fill="#f00000"/><rect x="904" y="358" width="5" height="3" fill="#f00000"/><rect x="914" y="347" width="1" height="68" fill="#f00000"/><rect x="912" y="358" width="5" height="49" fill="#f00000"/><rect x="922" y="354" width="1" height="62" fill="#007800"/><rect x="920" y="358" width="5" height="48" fill="#007800"/><rect x="930" y="340" width="1" height="32" fill="#007800"/><rect x="928" y="354" width="5" height="5" fill="#007800"/><rect x="938" y="289" width="1" height="70" fill="#007800"/><rect x="936" y="316" width="5" height="39" fill="#007800"/><rect x="946" y="293" width="1" height="47" fill="#007800"/><rect x="944" y="300" width="5" height="19" fill="#007800"/><rect x="954" y="278" width="1" height="47" fill="#f00000"/><rect x="952" y="300" width="5" height="8" fill="#f00000"/><rect x="962" y="307" width="1" height="44" fill="#f00000"/><rect x="960" y="307" width="5" height="28" fill="#f00000"/><rect x="970" y="302" width="1" height="58" fill="#007800"/><rect x="968" y="306" width="5" height="28" fill="#007800"/><rect x="978" y="289" width="1" height="38" fill="#f00000"/><rect x="976" y="306" width="5" height="17" fill="#f00000"/><rect x="986" y="314" width="1" height="58" fill="#f00000"/><rect x="984" y="320" width="5" height="33" fill="#f00000"/><rect x="994" y="251" width="1" height="135" fill="#007800"/><rect x="992" y="286" width="5" height="67" fill="#007800"/><rect x="1002" y="264" width="1" height="111" fill="#007800"/><rect x="1000" y="279" width="5" height="11" fill="#007800"/><rect x="1010" y="158" width="1" height="123" fill="#007800"/><rect x="1008" y="190" width="5" height="91" fill="#007800"/><rect x="1018" y="152" width="1" height="96" fill="#f00000"/><rect x="1016" y="189" width="5" height="37" fill="#f00000"/><rect x="1026" y="186" width="1" height="58" fill="#007800"/><rect x="1024" y="218" width="5" height="8" fill="#007800"/><rect x="1034" y="193" width="1" height="41" fill="#f00000"/><rect x="1032" y="216" width="5" height="7" fill="#f00000"/><rect x="1042" y="198" width="1" height="29" fill="#007800"/><rect x="1040" y="218" width="5" height="6" fill="#007800"/><rect x="1050" y="205" width="1" height="30" fill="#f00000"/><rect x="1048" y="218" width="5" height="3" fill="#f00000"/><rect x="1058" y="192" width="1" height="35" fill="#f00000"/><rect x="1056" y="217" width="5" height="4" fill="#f00000"/><rect x="1066" y="207" width="1" height="27" fill="#007800"/><rect x="1064" y="211" width="5" height="12" fill="#007800"/><rect x="1074" y="195" width="1" height="15" fill="#007800"/><rect x="1072" y="196" width="5" height="9" fill="#007800"/><rect x="1082" y="125" width="1" height="76" fill="#007800"/><rect x="1080" y="149" width="5" height="47" fill="#007800"/><rect x="1090" y="121" width="1" height="74" fill="#007800"/><rect x="1088" y="137" width="5" height="6" fill="#007800"/><rect x="1098" y="123" width="1" height="57" fill="#f00000"/><rect x="1096" y="137" width="5" height="18" fill="#f00000"/><rect x="1106" y="111" width="1" height="55" fill="#007800"/><rect x="1104" y="138" width="5" height="17" fill="#007800"/><rect x="1114" y="111" width="1" height="51" fill="#f00000"/><rect x="1112" y="136" width="5" height="23" fill="#f00000"/><rect x="1122" y="146" width="1" height="25" fill="#000"/><rect x="1120" y="156" width="5" height="2" fill="#000"/><rect x="1130" y="141" width="1" height="130" fill="#f00000"/><rect x="1128" y="155" width="5" height="116" fill="#f00000"/><rect x="1138" y="203" width="1" height="77" fill="#007800"/><rect x="1136" y="210" width="5" height="61" fill="#007800"/><rect x="1146" y="206" width="1" height="74" fill="#f00000"/><rect x="1144" y="212" width="5" height="49" fill="#f00000"/><rect x="1154" y="247" width="1" height="44" fill="#f00000"/><rect x="1152" y="262" width="5" height="29" fill="#f00000"/><rect x="1162" y="257" width="1" height="78" fill="#007800"/><rect x="1160" y="260" width="5" height="30" fill="#007800"/><rect x="1170" y="253" width="1" height="72" fill="#f00000"/><rect x="1168" y="260" width="5" height="60" fill="#f00000"/><rect x="1178" y="292" width="1" height="35" fill="#007800"/><rect x="1176" y="309" width="5" height="11" fill="#007800"/><rect x="1186" y="285" width="1" height="45" fill="#f00000"/><rect x="1184" y="310" width="5" height="6" fill="#f00000"/><rect x="1194" y="313" width="1" height="84" fill="#f00000"/><rect x="1192" y="313" width="5" height="25" fill="#f00000"/><rect x="1202" y="251" width="1" height="86" fill="#007800"/><rect x="1200" y="273" width="5" height="64" fill="#007800"/><rect x="1210" y="214" width="1" height="79" fill="#007800"/><rect x="1208" y="214" width="5" height="60" fill="#007800"/><rect x="1218" y="193" width="1" height="50" fill="#f00000"/><rect x="1216" y="213" width="5" height="16" fill="#f00000"/><rect x="1226" y="213" width="1" height="35" fill="#f00000"/><rect x="1224" y="226" width="5" height="6" fill="#f00000"/><rect x="1234" y="229" width="1" height="54" fill="#f00000"/><rect x="1232" y="231" width="5" height="38" fill="#f00000"/><rect x="1242" y="251" width="1" height="30" fill="#f00000"/><rect x="1240" y="266" width="5" height="5" fill="#f00000"/><rect x="1250" y="261" width="1" height="34" fill="#f00000"/><rect x="1248" y="269" width="5" height="2" fill="#f00000"/><rect x="1258" y="229" width="1" height="49" fill="#007800"/><rect x="1256" y="247" width="5" height="31" fill="#007800"/><rect x="1266" y="200" width="1" height="57" fill="#007800"/><rect x="1264" y="209" width="5" height="40" fill="#007800"/><rect x="1274" y="203" width="1" height="35" fill="#f00000"/><rect x="1272" y="209" width="5" height="24" fill="#f00000"/><rect x="1282" y="229" width="1" height="43" fill="#f00000"/><rect x="1280" y="232" width="5" height="5" fill="#f00000"/><rect x="1290" y="211" width="1" height="46" fill="#007800"/><rect x="1288" y="220" width="5" height="18" fill="#007800"/><rect x="1298" y="205" width="1" height="24" fill="#f00000"/><rect x="1296" y="219" width="5" height="10" fill="#f00000"/><rect x="1306" y="213" width="1" height="36" fill="#f00000"/><rect x="1304" y="227" width="5" height="11" fill="#f00000"/><rect x="1314" y="209" width="1" height="36" fill="#007800"/><rect x="1312" y="224" width="5" height="14" fill="#007800"/><text x="841" y="139" font-size="10" font-family="Liberation Sans" letter-spacing="-0.4" fill="#222">#35087064 sl</text><text x="841" y="217" font-size="10" font-family="Liberation Sans" letter-spacing="-0.4" fill="#222">#35087065 buy 0.01</text><text x="841" y="223" font-size="10" font-family="Liberation Sans" letter-spacing="-0.4" fill="#222">#35087064 sell 0.01</text><text x="841" y="300" font-size="10" font-family="Liberation Sans" letter-spacing="-0.4" fill="#222">#35087065 sl</text><text x="841" y="390" font-size="10" font-family="Liberation Sans" letter-spacing="-0.4" fill="#222">#35087064 tp</text><text x="848" y="102" font-size="10" font-family="Liberation Sans" letter-spacing="-0.25" xml:space="preserve" fill="#000">USDJPY,H1  103.903 103.960 103.886 103.932</text><path d="M837 96h7l-3.5 4z" fill="#000"/><rect x="1338" y="219" width="43" height="11" fill="#000"/><text x="1342" y="228" font-size="10" font-family="Liberation Sans" letter-spacing="-0.3" fill="#fff">103.932</text></svg><svg style="position:absolute;left:1120px;top:135px;" width="40" height="175" viewBox="0 0 40 175" shape-rendering="crispEdges"><path d="M2 6.5H10.5V167.5H34" stroke="#e2572c" fill="none"/></svg><svg style="position:absolute;left:1158px;top:256px;" width="8" height="8" viewBox="0 0 8 8" shape-rendering="crispEdges"><path d="M1 4l6-3v6z" fill="#fff" stroke="#e03020"/></svg><svg style="position:absolute;left:591px;top:416px;" width="7" height="9" viewBox="0 0 7 9" shape-rendering="crispEdges"><path d="M1 4.5L6.5 0.5v8z" fill="#e82020"/><path d="M3 4.5L6 2.5v4z" fill="#fff"/></svg><svg style="position:absolute;left:703px;top:453px;" width="8" height="19" viewBox="0 0 8 19" shape-rendering="crispEdges"><path d="M7 1L2 6l5 5z" fill="#e82020" stroke="#2030a0" stroke-width="0.8"/><path d="M7 8L2 13l5 5z" fill="#e82020" stroke="#2030a0" stroke-width="0.8"/></svg><div style="position:absolute;left:251px;top:552px;width:1142px;height:4px;background:#d8d8d8;"></div><div style="position:absolute;left:251px;top:555px;width:1142px;height:1px;background:#404040;"></div><div style="position:absolute;left:251px;top:556px;width:1142px;height:19px;background:#f0f0f0;"></div><div style="position:absolute;left:252px;top:556px;width:1px;height:19px;background:#a0a0a0;"></div><div style="position:absolute;left:267px;top:558px;font-size:12px;line-height:15px;color:#6d6d6d;white-space:nowrap;letter-spacing:-0.8px;">EURUSD,H1</div><div style="position:absolute;left:341px;top:555px;width:79px;height:20px;background:#fff;border:1px solid #000;border-top:none;box-shadow:1px 1px 0 #888;"></div><div style="position:absolute;left:351px;top:558px;font-size:12px;line-height:15px;color:#000;white-space:nowrap;letter-spacing:-0.8px;">USDJPY,H1</div><svg style="position:absolute;left:1360px;top:560px;" width="30" height="9" viewBox="0 0 30 9" shape-rendering="crispEdges"><path d="M5 1L1 4.5 5 8z" fill="#aaa"/><path d="M20 1l4 3.5L20 8z" fill="#aaa"/></svg><div style="position:absolute;left:251px;top:575px;width:1142px;height:1px;background:#a0a0a0;"></div><div style="position:absolute;left:4px;top:576px;width:1389px;height:260px;background:#f0f0f0;"></div><svg style="position:absolute;left:7px;top:580px;" width="8" height="8" viewBox="0 0 8 8" shape-rendering="crispEdges"><path d="M1.5 1.5l5 5M6.5 1.5l-5 5" stroke="#000" stroke-width="1.6"/></svg><div style="position:absolute;left:5px;top:593px;width:13px;height:239px;background:#b1c7e0;"></div><div style="position:absolute;left:-18px;top:802px;width:60px;height:13px;transform:rotate(-90deg);font-size:11px;line-height:13px;color:#14244a;text-align:center;white-space:nowrap;">Terminal</div><div style="position:absolute;left:19px;top:579px;width:1371px;height:230px;background:#fff;border-top:1px solid #a0a0a0;border-left:1px solid #b0b0b0;"></div><div style="position:absolute;left:154px;top:580px;width:1px;height:24px;background:#e3e3e3;"></div><div style="position:absolute;left:342px;top:580px;width:1px;height:24px;background:#e3e3e3;"></div><div style="position:absolute;left:436px;top:580px;width:1px;height:24px;background:#e3e3e3;"></div><div style="position:absolute;left:509px;top:580px;width:1px;height:24px;background:#e3e3e3;"></div><div style="position:absolute;left:603px;top:580px;width:1px;height:24px;background:#e3e3e3;"></div><div style="position:absolute;left:707px;top:580px;width:1px;height:24px;background:#e3e3e3;"></div><div style="position:absolute;left:811px;top:580px;width:1px;height:24px;background:#e3e3e3;"></div><div style="position:absolute;left:915px;top:580px;width:1px;height:24px;background:#e3e3e3;"></div><div style="position:absolute;left:1019px;top:580px;width:1px;height:24px;background:#e3e3e3;"></div><div style="position:absolute;left:1123px;top:580px;width:1px;height:24px;background:#e3e3e3;"></div><div style="position:absolute;left:1227px;top:580px;width:1px;height:24px;background:#e3e3e3;"></div><div style="position:absolute;left:26px;top:585px;font-size:12px;line-height:15px;color:#111;white-space:nowrap;">Order</div><svg style="position:absolute;left:80px;top:588px;" width="6" height="9" viewBox="0 0 6 9" shape-rendering="crispEdges"><path d="M1 8L5 1" stroke="#777"/></svg><div style="position:absolute;right:1065px;top:585px;font-size:12px;line-height:15px;color:#111;white-space:nowrap;text-align:right;">Time</div><div style="position:absolute;right:971px;top:585px;font-size:12px;line-height:15px;color:#111;white-space:nowrap;text-align:right;">Type</div><div style="position:absolute;right:898px;top:585px;font-size:12px;line-height:15px;color:#111;white-space:nowrap;text-align:right;">Size</div><div style="position:absolute;right:804px;top:585px;font-size:12px;line-height:15px;color:#111;white-space:nowrap;text-align:right;">Symbol</div><div style="position:absolute;right:700px;top:585px;font-size:12px;line-height:15px;color:#111;white-space:nowrap;text-align:right;">Price</div><div style="position:absolute;right:596px;top:585px;font-size:12px;line-height:15px;color:#111;white-space:nowrap;text-align:right;">S / L</div><div style="position:absolute;right:492px;top:585px;font-size:12px;line-height:15px;color:#111;white-space:nowrap;text-align:right;">T / P</div><div style="position:absolute;right:388px;top:585px;font-size:12px;line-height:15px;color:#111;white-space:nowrap;text-align:right;">Price</div><div style="position:absolute;right:284px;top:585px;font-size:12px;line-height:15px;color:#111;white-space:nowrap;text-align:right;">Commission</div><div style="position:absolute;right:180px;top:585px;font-size:12px;line-height:15px;color:#111;white-space:nowrap;text-align:right;">Swap</div><div style="position:absolute;right:19px;top:585px;font-size:12px;line-height:15px;color:#111;white-space:nowrap;text-align:right;">Profit</div><div style="position:absolute;left:20px;top:604px;width:1369px;height:20px;background:#3399ff;"></div><div style="position:absolute;left:154px;top:604px;width:1px;height:20px;background:#7ab8f5;"></div><div style="position:absolute;left:342px;top:604px;width:1px;height:20px;background:#7ab8f5;"></div><div style="position:absolute;left:436px;top:604px;width:1px;height:20px;background:#7ab8f5;"></div><div style="position:absolute;left:509px;top:604px;width:1px;height:20px;background:#7ab8f5;"></div><div style="position:absolute;left:603px;top:604px;width:1px;height:20px;background:#7ab8f5;"></div><div style="position:absolute;left:707px;top:604px;width:1px;height:20px;background:#7ab8f5;"></div><div style="position:absolute;left:811px;top:604px;width:1px;height:20px;background:#7ab8f5;"></div><div style="position:absolute;left:915px;top:604px;width:1px;height:20px;background:#7ab8f5;"></div><div style="position:absolute;left:1019px;top:604px;width:1px;height:20px;background:#7ab8f5;"></div><div style="position:absolute;left:1123px;top:604px;width:1px;height:20px;background:#7ab8f5;"></div><div style="position:absolute;left:1227px;top:604px;width:1px;height:20px;background:#7ab8f5;"></div><svg style="position:absolute;left:23px;top:606px;" width="16" height="16" viewBox="0 0 16 16" shape-rendering="crispEdges"><path d="M1.5 0.5h8l3 3v11h-11z" fill="#fff" stroke="#555"/><path d="M9.5 0.5v3h3" fill="none" stroke="#555"/><circle cx="11.5" cy="12.5" r="3.5" fill="#2a9ad8" stroke="#333" stroke-width="0.6" shape-rendering="geometricPrecision"/></svg><div style="position:absolute;left:42px;top:607px;font-size:11.5px;line-height:14.5px;color:#fff;white-space:nowrap;letter-spacing:-0.2px;">35087062</div><div style="position:absolute;right:1064px;top:607px;font-size:11.5px;line-height:14.5px;color:#fff;white-space:nowrap;text-align:right;letter-spacing:-0.2px;">2016.10.24 04:16:12</div><div style="position:absolute;right:971px;top:607px;font-size:11.5px;line-height:14.5px;color:#fff;white-space:nowrap;text-align:right;letter-spacing:-0.2px;">buy</div><div style="position:absolute;right:898px;top:607px;font-size:11.5px;line-height:14.5px;color:#fff;white-space:nowrap;text-align:right;letter-spacing:-0.2px;">0.01</div><div style="position:absolute;right:804px;top:607px;font-size:11.5px;line-height:14.5px;color:#fff;white-space:nowrap;text-align:right;letter-spacing:-0.2px;">eurusd</div><div style="position:absolute;right:699px;top:607px;font-size:11.5px;line-height:14.5px;color:#fff;white-space:nowrap;text-align:right;letter-spacing:-0.2px;">1.08696</div><div style="position:absolute;right:595px;top:607px;font-size:11.5px;line-height:14.5px;color:#fff;white-space:nowrap;text-align:right;letter-spacing:-0.2px;">1.08496</div><div style="position:absolute;right:492px;top:607px;font-size:11.5px;line-height:14.5px;color:#fff;white-space:nowrap;text-align:right;letter-spacing:-0.2px;">1.09096</div><div style="position:absolute;right:388px;top:607px;font-size:11.5px;line-height:14.5px;color:#fff;white-space:nowrap;text-align:right;letter-spacing:-0.2px;">1.08655</div><div style="position:absolute;right:284px;top:607px;font-size:11.5px;line-height:14.5px;color:#fff;white-space:nowrap;text-align:right;letter-spacing:-0.2px;">0.00</div><div style="position:absolute;right:180px;top:607px;font-size:11.5px;line-height:14.5px;color:#fff;white-space:nowrap;text-align:right;letter-spacing:-0.2px;">0.00</div><div style="position:absolute;right:38px;top:607px;font-size:11.5px;line-height:14.5px;color:#fff;white-space:nowrap;text-align:right;letter-spacing:-0.2px;">-0.41</div><svg style="position:absolute;left:1373px;top:610px;" width="9" height="9" viewBox="0 0 9 9" shape-rendering="crispEdges"><path d="M1 1l7 7M8 1l-7 7" stroke="#b8b8b8" stroke-width="2"/></svg><div style="position:absolute;left:20px;top:624px;width:1369px;height:20px;background:#e9e9e9;"></div><div style="position:absolute;left:20px;top:643px;width:1369px;height:1px;background:#d6d6d6;"></div><div style="position:absolute;left:154px;top:624px;width:1px;height:20px;background:#d9d9d9;"></div><div style="position:absolute;left:342px;top:624px;width:1px;height:20px;background:#d9d9d9;"></div><div style="position:absolute;left:436px;top:624px;width:1px;height:20px;background:#d9d9d9;"></div><div style="position:absolute;left:509px;top:624px;width:1px;height:20px;background:#d9d9d9;"></div><div style="position:absolute;left:603px;top:624px;width:1px;height:20px;background:#d9d9d9;"></div><div style="position:absolute;left:707px;top:624px;width:1px;height:20px;background:#d9d9d9;"></div><div style="position:absolute;left:811px;top:624px;width:1px;height:20px;background:#d9d9d9;"></div><div style="position:absolute;left:915px;top:624px;width:1px;height:20px;background:#d9d9d9;"></div><div style="position:absolute;left:1019px;top:624px;width:1px;height:20px;background:#d9d9d9;"></div><div style="position:absolute;left:1123px;top:624px;width:1px;height:20px;background:#d9d9d9;"></div><div style="position:absolute;left:1227px;top:624px;width:1px;height:20px;background:#d9d9d9;"></div><svg style="position:absolute;left:23px;top:626px;" width="16" height="16" viewBox="0 0 16 16" shape-rendering="crispEdges"><path d="M1.5 0.5h8l3 3v11h-11z" fill="#fff" stroke="#555"/><path d="M9.5 0.5v3h3" fill="none" stroke="#555"/><circle cx="11.5" cy="12.5" r="3.5" fill="#e04a20" stroke="#333" stroke-width="0.6" shape-rendering="geometricPrecision"/></svg><div style="position:absolute;left:42px;top:627px;font-size:11.5px;line-height:14.5px;color:#111;white-space:nowrap;letter-spacing:-0.2px;">35087063</div><div style="position:absolute;right:1064px;top:627px;font-size:11.5px;line-height:14.5px;color:#111;white-space:nowrap;text-align:right;letter-spacing:-0.2px;">2016.10.24 04:16:18</div><div style="position:absolute;right:971px;top:627px;font-size:11.5px;line-height:14.5px;color:#111;white-space:nowrap;text-align:right;letter-spacing:-0.2px;">sell</div><div style="position:absolute;right:898px;top:627px;font-size:11.5px;line-height:14.5px;color:#111;white-space:nowrap;text-align:right;letter-spacing:-0.2px;">0.01</div><div style="position:absolute;right:804px;top:627px;font-size:11.5px;line-height:14.5px;color:#111;white-space:nowrap;text-align:right;letter-spacing:-0.2px;">eurusd</div><div style="position:absolute;right:699px;top:627px;font-size:11.5px;line-height:14.5px;color:#111;white-space:nowrap;text-align:right;letter-spacing:-0.2px;">1.08682</div><div style="position:absolute;right:595px;top:627px;font-size:11.5px;line-height:14.5px;color:#111;white-space:nowrap;text-align:right;letter-spacing:-0.2px;">1.08882</div><div style="position:absolute;right:492px;top:627px;font-size:11.5px;line-height:14.5px;color:#111;white-space:nowrap;text-align:right;letter-spacing:-0.2px;">1.08282</div><div style="position:absolute;right:388px;top:627px;font-size:11.5px;line-height:14.5px;color:#111;white-space:nowrap;text-align:right;letter-spacing:-0.2px;">1.08671</div><div style="position:absolute;right:284px;top:627px;font-size:11.5px;line-height:14.5px;color:#111;white-space:nowrap;text-align:right;letter-spacing:-0.2px;">0.00</div><div style="position:absolute;right:180px;top:627px;font-size:11.5px;line-height:14.5px;color:#111;white-space:nowrap;text-align:right;letter-spacing:-0.2px;">0.00</div><div style="position:absolute;right:38px;top:627px;font-size:11.5px;line-height:14.5px;color:#111;white-space:nowrap;text-align:right;letter-spacing:-0.2px;">0.11</div><svg style="position:absolute;left:1373px;top:630px;" width="9" height="9" viewBox="0 0 9 9" shape-rendering="crispEdges"><path d="M1 1l7 7M8 1l-7 7" stroke="#8a8a8a" stroke-width="2"/></svg><div style="position:absolute;left:20px;top:644px;width:1369px;height:20px;background:#ffffff;"></div><div style="position:absolute;left:20px;top:663px;width:1369px;height:1px;background:#d6d6d6;"></div><div style="position:absolute;left:154px;top:644px;width:1px;height:20px;background:#d9d9d9;"></div><div style="position:absolute;left:342px;top:644px;width:1px;height:20px;background:#d9d9d9;"></div><div style="position:absolute;left:436px;top:644px;width:1px;height:20px;background:#d9d9d9;"></div><div style="position:absolute;left:509px;top:644px;width:1px;height:20px;background:#d9d9d9;"></div><div style="position:absolute;left:603px;top:644px;width:1px;height:20px;background:#d9d9d9;"></div><div style="position:absolute;left:707px;top:644px;width:1px;height:20px;background:#d9d9d9;"></div><div style="position:absolute;left:811px;top:644px;width:1px;height:20px;background:#d9d9d9;"></div><div style="position:absolute;left:915px;top:644px;width:1px;height:20px;background:#d9d9d9;"></div><div style="position:absolute;left:1019px;top:644px;width:1px;height:20px;background:#d9d9d9;"></div><div style="position:absolute;left:1123px;top:644px;width:1px;height:20px;background:#d9d9d9;"></div><div style="position:absolute;left:1227px;top:644px;width:1px;height:20px;background:#d9d9d9;"></div><svg style="position:absolute;left:23px;top:646px;" width="16" height="16" viewBox="0 0 16 16" shape-rendering="crispEdges"><path d="M1.5 0.5h8l3 3v11h-11z" fill="#fff" stroke="#555"/><path d="M9.5 0.5v3h3" fill="none" stroke="#555"/><circle cx="11.5" cy="12.5" r="3.5" fill="#e04a20" stroke="#333" stroke-width="0.6" shape-rendering="geometricPrecision"/></svg><div style="position:absolute;left:42px;top:647px;font-size:11.5px;line-height:14.5px;color:#111;white-space:nowrap;letter-spacing:-0.2px;">35087064</div><div style="position:absolute;right:1064px;top:647px;font-size:11.5px;line-height:14.5px;color:#111;white-space:nowrap;text-align:right;letter-spacing:-0.2px;">2016.10.24 04:16:21</div><div style="position:absolute;right:971px;top:647px;font-size:11.5px;line-height:14.5px;color:#111;white-space:nowrap;text-align:right;letter-spacing:-0.2px;">sell</div><div style="position:absolute;right:898px;top:647px;font-size:11.5px;line-height:14.5px;color:#111;white-space:nowrap;text-align:right;letter-spacing:-0.2px;">0.01</div><div style="position:absolute;right:804px;top:647px;font-size:11.5px;line-height:14.5px;color:#111;white-space:nowrap;text-align:right;letter-spacing:-0.2px;">usdjpy</div><div style="position:absolute;right:699px;top:647px;font-size:11.5px;line-height:14.5px;color:#111;white-space:nowrap;text-align:right;letter-spacing:-0.2px;">103.929</div><div style="position:absolute;right:595px;top:647px;font-size:11.5px;line-height:14.5px;color:#111;white-space:nowrap;text-align:right;letter-spacing:-0.2px;">104.129</div><div style="position:absolute;right:492px;top:647px;font-size:11.5px;line-height:14.5px;color:#111;white-space:nowrap;text-align:right;letter-spacing:-0.2px;">103.529</div><div style="position:absolute;right:388px;top:647px;font-size:11.5px;line-height:14.5px;color:#111;white-space:nowrap;text-align:right;letter-spacing:-0.2px;">103.943</div><div style="position:absolute;right:284px;top:647px;font-size:11.5px;line-height:14.5px;color:#111;white-space:nowrap;text-align:right;letter-spacing:-0.2px;">0.00</div><div style="position:absolute;right:180px;top:647px;font-size:11.5px;line-height:14.5px;color:#111;white-space:nowrap;text-align:right;letter-spacing:-0.2px;">0.00</div><div style="position:absolute;right:38px;top:647px;font-size:11.5px;line-height:14.5px;color:#111;white-space:nowrap;text-align:right;letter-spacing:-0.2px;">-0.13</div><svg style="position:absolute;left:1373px;top:650px;" width="9" height="9" viewBox="0 0 9 9" shape-rendering="crispEdges"><path d="M1 1l7 7M8 1l-7 7" stroke="#8a8a8a" stroke-width="2"/></svg><div style="position:absolute;left:20px;top:664px;width:1369px;height:20px;background:#e9e9e9;"></div><div style="position:absolute;left:20px;top:683px;width:1369px;height:1px;background:#d6d6d6;"></div><div style="position:absolute;left:154px;top:664px;width:1px;height:20px;background:#d9d9d9;"></div><div style="position:absolute;left:342px;top:664px;width:1px;height:20px;background:#d9d9d9;"></div><div style="position:absolute;left:436px;top:664px;width:1px;height:20px;background:#d9d9d9;"></div><div style="position:absolute;left:509px;top:664px;width:1px;height:20px;background:#d9d9d9;"></div><div style="position:absolute;left:603px;top:664px;width:1px;height:20px;background:#d9d9d9;"></div><div style="position:absolute;left:707px;top:664px;width:1px;height:20px;background:#d9d9d9;"></div><div style="position:absolute;left:811px;top:664px;width:1px;height:20px;background:#d9d9d9;"></div><div style="position:absolute;left:915px;top:664px;width:1px;height:20px;background:#d9d9d9;"></div><div style="position:absolute;left:1019px;top:664px;width:1px;height:20px;background:#d9d9d9;"></div><div style="position:absolute;left:1123px;top:664px;width:1px;height:20px;background:#d9d9d9;"></div><div style="position:absolute;left:1227px;top:664px;width:1px;height:20px;background:#d9d9d9;"></div><svg style="position:absolute;left:23px;top:666px;" width="16" height="16" viewBox="0 0 16 16" shape-rendering="crispEdges"><path d="M1.5 0.5h8l3 3v11h-11z" fill="#fff" stroke="#555"/><path d="M9.5 0.5v3h3" fill="none" stroke="#555"/><circle cx="11.5" cy="12.5" r="3.5" fill="#2a9ad8" stroke="#333" stroke-width="0.6" shape-rendering="geometricPrecision"/></svg><div style="position:absolute;left:42px;top:667px;font-size:11.5px;line-height:14.5px;color:#111;white-space:nowrap;letter-spacing:-0.2px;">35087065</div><div style="position:absolute;right:1064px;top:667px;font-size:11.5px;line-height:14.5px;color:#111;white-space:nowrap;text-align:right;letter-spacing:-0.2px;">2016.10.24 04:16:25</div><div style="position:absolute;right:971px;top:667px;font-size:11.5px;line-height:14.5px;color:#111;white-space:nowrap;text-align:right;letter-spacing:-0.2px;">buy</div><div style="position:absolute;right:898px;top:667px;font-size:11.5px;line-height:14.5px;color:#111;white-space:nowrap;text-align:right;letter-spacing:-0.2px;">0.01</div><div style="position:absolute;right:804px;top:667px;font-size:11.5px;line-height:14.5px;color:#111;white-space:nowrap;text-align:right;letter-spacing:-0.2px;">usdjpy</div><div style="position:absolute;right:699px;top:667px;font-size:11.5px;line-height:14.5px;color:#111;white-space:nowrap;text-align:right;letter-spacing:-0.2px;">103.945</div><div style="position:absolute;right:595px;top:667px;font-size:11.5px;line-height:14.5px;color:#111;white-space:nowrap;text-align:right;letter-spacing:-0.2px;">103.745</div><div style="position:absolute;right:492px;top:667px;font-size:11.5px;line-height:14.5px;color:#111;white-space:nowrap;text-align:right;letter-spacing:-0.2px;">104.345</div><div style="position:absolute;right:388px;top:667px;font-size:11.5px;line-height:14.5px;color:#111;white-space:nowrap;text-align:right;letter-spacing:-0.2px;">103.928</div><div style="position:absolute;right:284px;top:667px;font-size:11.5px;line-height:14.5px;color:#111;white-space:nowrap;text-align:right;letter-spacing:-0.2px;">0.00</div><div style="position:absolute;right:180px;top:667px;font-size:11.5px;line-height:14.5px;color:#111;white-space:nowrap;text-align:right;letter-spacing:-0.2px;">0.00</div><div style="position:absolute;right:38px;top:667px;font-size:11.5px;line-height:14.5px;color:#111;white-space:nowrap;text-align:right;letter-spacing:-0.2px;">-0.16</div><svg style="position:absolute;left:1373px;top:670px;" width="9" height="9" viewBox="0 0 9 9" shape-rendering="crispEdges"><path d="M1 1l7 7M8 1l-7 7" stroke="#8a8a8a" stroke-width="2"/></svg><div style="position:absolute;left:20px;top:684px;width:1369px;height:20px;background:#cbcbcb;"></div><svg style="position:absolute;left:23px;top:686px;" width="15" height="16" viewBox="0 0 15 16" shape-rendering="crispEdges"><rect x="0.5" y="0.5" width="13" height="14" fill="#fff" stroke="#555"/><path d="M7 12l4-4H8.5V4h-3v4H3z" fill="#f06a30" stroke="#b03010" stroke-width="0.7"/></svg><div style="position:absolute;left:42px;top:687px;font-size:11.5px;line-height:14.5px;color:#000;white-space:nowrap;font-weight:bold;">Balance: 9 968.82 USD&nbsp; Equity: 9 968.23&nbsp; Free margin: 9 968.23</div><div style="position:absolute;right:39px;top:687px;font-size:11.5px;line-height:14.5px;color:#000;white-space:nowrap;text-align:right;font-weight:bold;">-0.59</div><div style="position:absolute;left:20px;top:810px;width:1370px;height:1px;background:#000;"></div><div style="position:absolute;left:22px;top:810px;width:50px;height:20px;background:#fff;border:1px solid #000;border-top:none;box-shadow:1px 1px 0 #777;"></div><div style="position:absolute;left:32px;top:813px;font-size:12px;line-height:15px;color:#000;white-space:nowrap;">Trade</div><div style="position:absolute;left:82px;top:813px;font-size:12px;line-height:15px;color:#6a6a6a;white-space:nowrap;">Exposure</div><div style="position:absolute;left:139px;top:813px;width:1px;height:15px;background:#6a6a6a;"></div><div style="position:absolute;left:149px;top:813px;font-size:12px;line-height:15px;color:#6a6a6a;white-space:nowrap;">Account History</div><div style="position:absolute;left:245px;top:813px;width:1px;height:15px;background:#6a6a6a;"></div><div style="position:absolute;left:255px;top:813px;font-size:12px;line-height:15px;color:#6a6a6a;white-space:nowrap;">News</div><div style="position:absolute;left:294px;top:813px;width:1px;height:15px;background:#6a6a6a;"></div><div style="position:absolute;left:304px;top:813px;font-size:12px;line-height:15px;color:#6a6a6a;white-space:nowrap;">Alerts</div><div style="position:absolute;left:344px;top:813px;width:1px;height:15px;background:#6a6a6a;"></div><div style="position:absolute;left:354px;top:813px;font-size:12px;line-height:15px;color:#6a6a6a;white-space:nowrap;">Mailbox</div><div style="position:absolute;left:410px;top:813px;width:1px;height:15px;background:#6a6a6a;"></div><div style="position:absolute;left:423px;top:813px;font-size:12px;line-height:15px;color:#6a6a6a;white-space:nowrap;">Market</div><div style="position:absolute;left:481px;top:813px;width:1px;height:15px;background:#6a6a6a;"></div><div style="position:absolute;left:491px;top:813px;font-size:12px;line-height:15px;color:#6a6a6a;white-space:nowrap;">Signals</div><div style="position:absolute;left:539px;top:813px;width:1px;height:15px;background:#6a6a6a;"></div><div style="position:absolute;left:549px;top:813px;font-size:12px;line-height:15px;color:#6a6a6a;white-space:nowrap;">Code Base</div><div style="position:absolute;left:614px;top:813px;width:1px;height:15px;background:#6a6a6a;"></div><div style="position:absolute;left:624px;top:813px;font-size:12px;line-height:15px;color:#6a6a6a;white-space:nowrap;">Experts</div><div style="position:absolute;left:671px;top:813px;width:1px;height:15px;background:#6a6a6a;"></div><div style="position:absolute;left:681px;top:813px;font-size:12px;line-height:15px;color:#6a6a6a;white-space:nowrap;">Journal</div><div style="position:absolute;left:729px;top:813px;width:1px;height:15px;background:#6a6a6a;"></div><div style="position:absolute;left:396px;top:817px;font-size:9.5px;line-height:12.5px;color:#d02020;white-space:nowrap;font-weight:bold;">5</div><div style="position:absolute;left:460px;top:817px;font-size:9.5px;line-height:12.5px;color:#d02020;white-space:nowrap;font-weight:bold;">36</div><div style="position:absolute;left:4px;top:834px;width:1389px;height:1px;background:#a0a0a0;"></div><div style="position:absolute;left:4px;top:835px;width:1389px;height:1px;background:#fff;"></div><div style="position:absolute;left:4px;top:836px;width:1389px;height:30px;background:#f0f0f0;"></div><svg style="position:absolute;left:7px;top:842px;" width="8" height="8" viewBox="0 0 8 8" shape-rendering="crispEdges"><path d="M1.5 1.5l5 5M6.5 1.5l-5 5" stroke="#000" stroke-width="1.6"/></svg><svg style="position:absolute;left:8px;top:851px;" width="6" height="8" viewBox="0 0 6 8" shape-rendering="crispEdges"><path d="M0 0.5h6M0 2.5h6M0 4.5h6M0 6.5h6" stroke="#aaa"/></svg><div style="position:absolute;left:19px;top:841px;width:1371px;height:21px;background:#fff;border-top:1px solid #a8a8a8;border-left:1px solid #a8a8a8;"></div><svg style="position:absolute;left:24px;top:846px;" width="9" height="9" viewBox="0 0 9 9" shape-rendering="crispEdges"><circle cx="4.5" cy="4.5" r="3.5" fill="#bbb" stroke="#888" shape-rendering="geometricPrecision"/></svg><div style="position:absolute;left:38px;top:844px;font-size:12px;line-height:15px;color:#000;white-space:nowrap;">Strategy Tester</div><div style="position:absolute;left:4px;top:865px;width:1389px;height:1px;background:#a0a0a0;"></div><div style="position:absolute;left:4px;top:866px;width:1389px;height:23px;background:#f0f0f0;"></div><div style="position:absolute;left:6px;top:872px;font-size:12px;line-height:15px;color:#000;white-space:nowrap;">For Help, press F1</div><div style="position:absolute;left:680px;top:869px;width:1px;height:19px;background:#a8a8a8;"></div><div style="position:absolute;left:796px;top:869px;width:1px;height:19px;background:#a8a8a8;"></div><div style="position:absolute;left:898px;top:869px;width:1px;height:19px;background:#a8a8a8;"></div><div style="position:absolute;left:969px;top:869px;width:1px;height:19px;background:#a8a8a8;"></div><div style="position:absolute;left:1040px;top:869px;width:1px;height:19px;background:#a8a8a8;"></div><div style="position:absolute;left:1108px;top:869px;width:1px;height:19px;background:#a8a8a8;"></div><div style="position:absolute;left:1178px;top:869px;width:1px;height:19px;background:#a8a8a8;"></div><div style="position:absolute;left:1244px;top:869px;width:1px;height:19px;background:#a8a8a8;"></div><div style="position:absolute;left:686px;top:872px;font-size:12px;line-height:15px;color:#000;white-space:nowrap;">Default</div><svg style="position:absolute;left:1250px;top:872px;" width="24" height="15" viewBox="0 0 24 15" shape-rendering="crispEdges"><rect x="0.0" y="7.0" width="1.6" height="3.5" fill="#8a9c10"/><rect x="0.0" y="10.5" width="1.6" height="3.5" fill="#10407a"/><rect x="2.3" y="6.4" width="1.6" height="3.8" fill="#8a9c10"/><rect x="2.3" y="10.2" width="1.6" height="3.8" fill="#10407a"/><rect x="4.6" y="5.8" width="1.6" height="4.1" fill="#8a9c10"/><rect x="4.6" y="9.9" width="1.6" height="4.1" fill="#10407a"/><rect x="6.9" y="5.2" width="1.6" height="4.4" fill="#8a9c10"/><rect x="6.9" y="9.6" width="1.6" height="4.4" fill="#10407a"/><rect x="9.2" y="4.6" width="1.6" height="4.7" fill="#8a9c10"/><rect x="9.2" y="9.3" width="1.6" height="4.7" fill="#10407a"/><rect x="11.5" y="4.0" width="1.6" height="5.0" fill="#8a9c10"/><rect x="11.5" y="9.0" width="1.6" height="5.0" fill="#10407a"/><rect x="13.8" y="3.4" width="1.6" height="5.3" fill="#8a9c10"/><rect x="13.8" y="8.7" width="1.6" height="5.3" fill="#10407a"/><rect x="16.1" y="2.8" width="1.6" height="5.6" fill="#8a9c10"/><rect x="16.1" y="8.4" width="1.6" height="5.6" fill="#10407a"/><rect x="18.4" y="2.2" width="1.6" height="5.9" fill="#8a9c10"/><rect x="18.4" y="8.1" width="1.6" height="5.9" fill="#10407a"/><rect x="20.7" y="1.6" width="1.6" height="6.2" fill="#8a9c10"/><rect x="20.7" y="7.8" width="1.6" height="6.2" fill="#10407a"/></svg><div style="position:absolute;left:1277px;top:872px;font-size:12px;line-height:15px;color:#000;white-space:nowrap;">15251/36 kb</div><svg style="position:absolute;left:1377px;top:873px;" width="16" height="16" viewBox="0 0 16 16" shape-rendering="crispEdges"><path d="M16 1L1 16M16 5L5 16M16 9L9 16M16 13l-3 3" stroke="#9a9a9a" stroke-width="1.2" shape-rendering="geometricPrecision"/></svg>
</body></html>
